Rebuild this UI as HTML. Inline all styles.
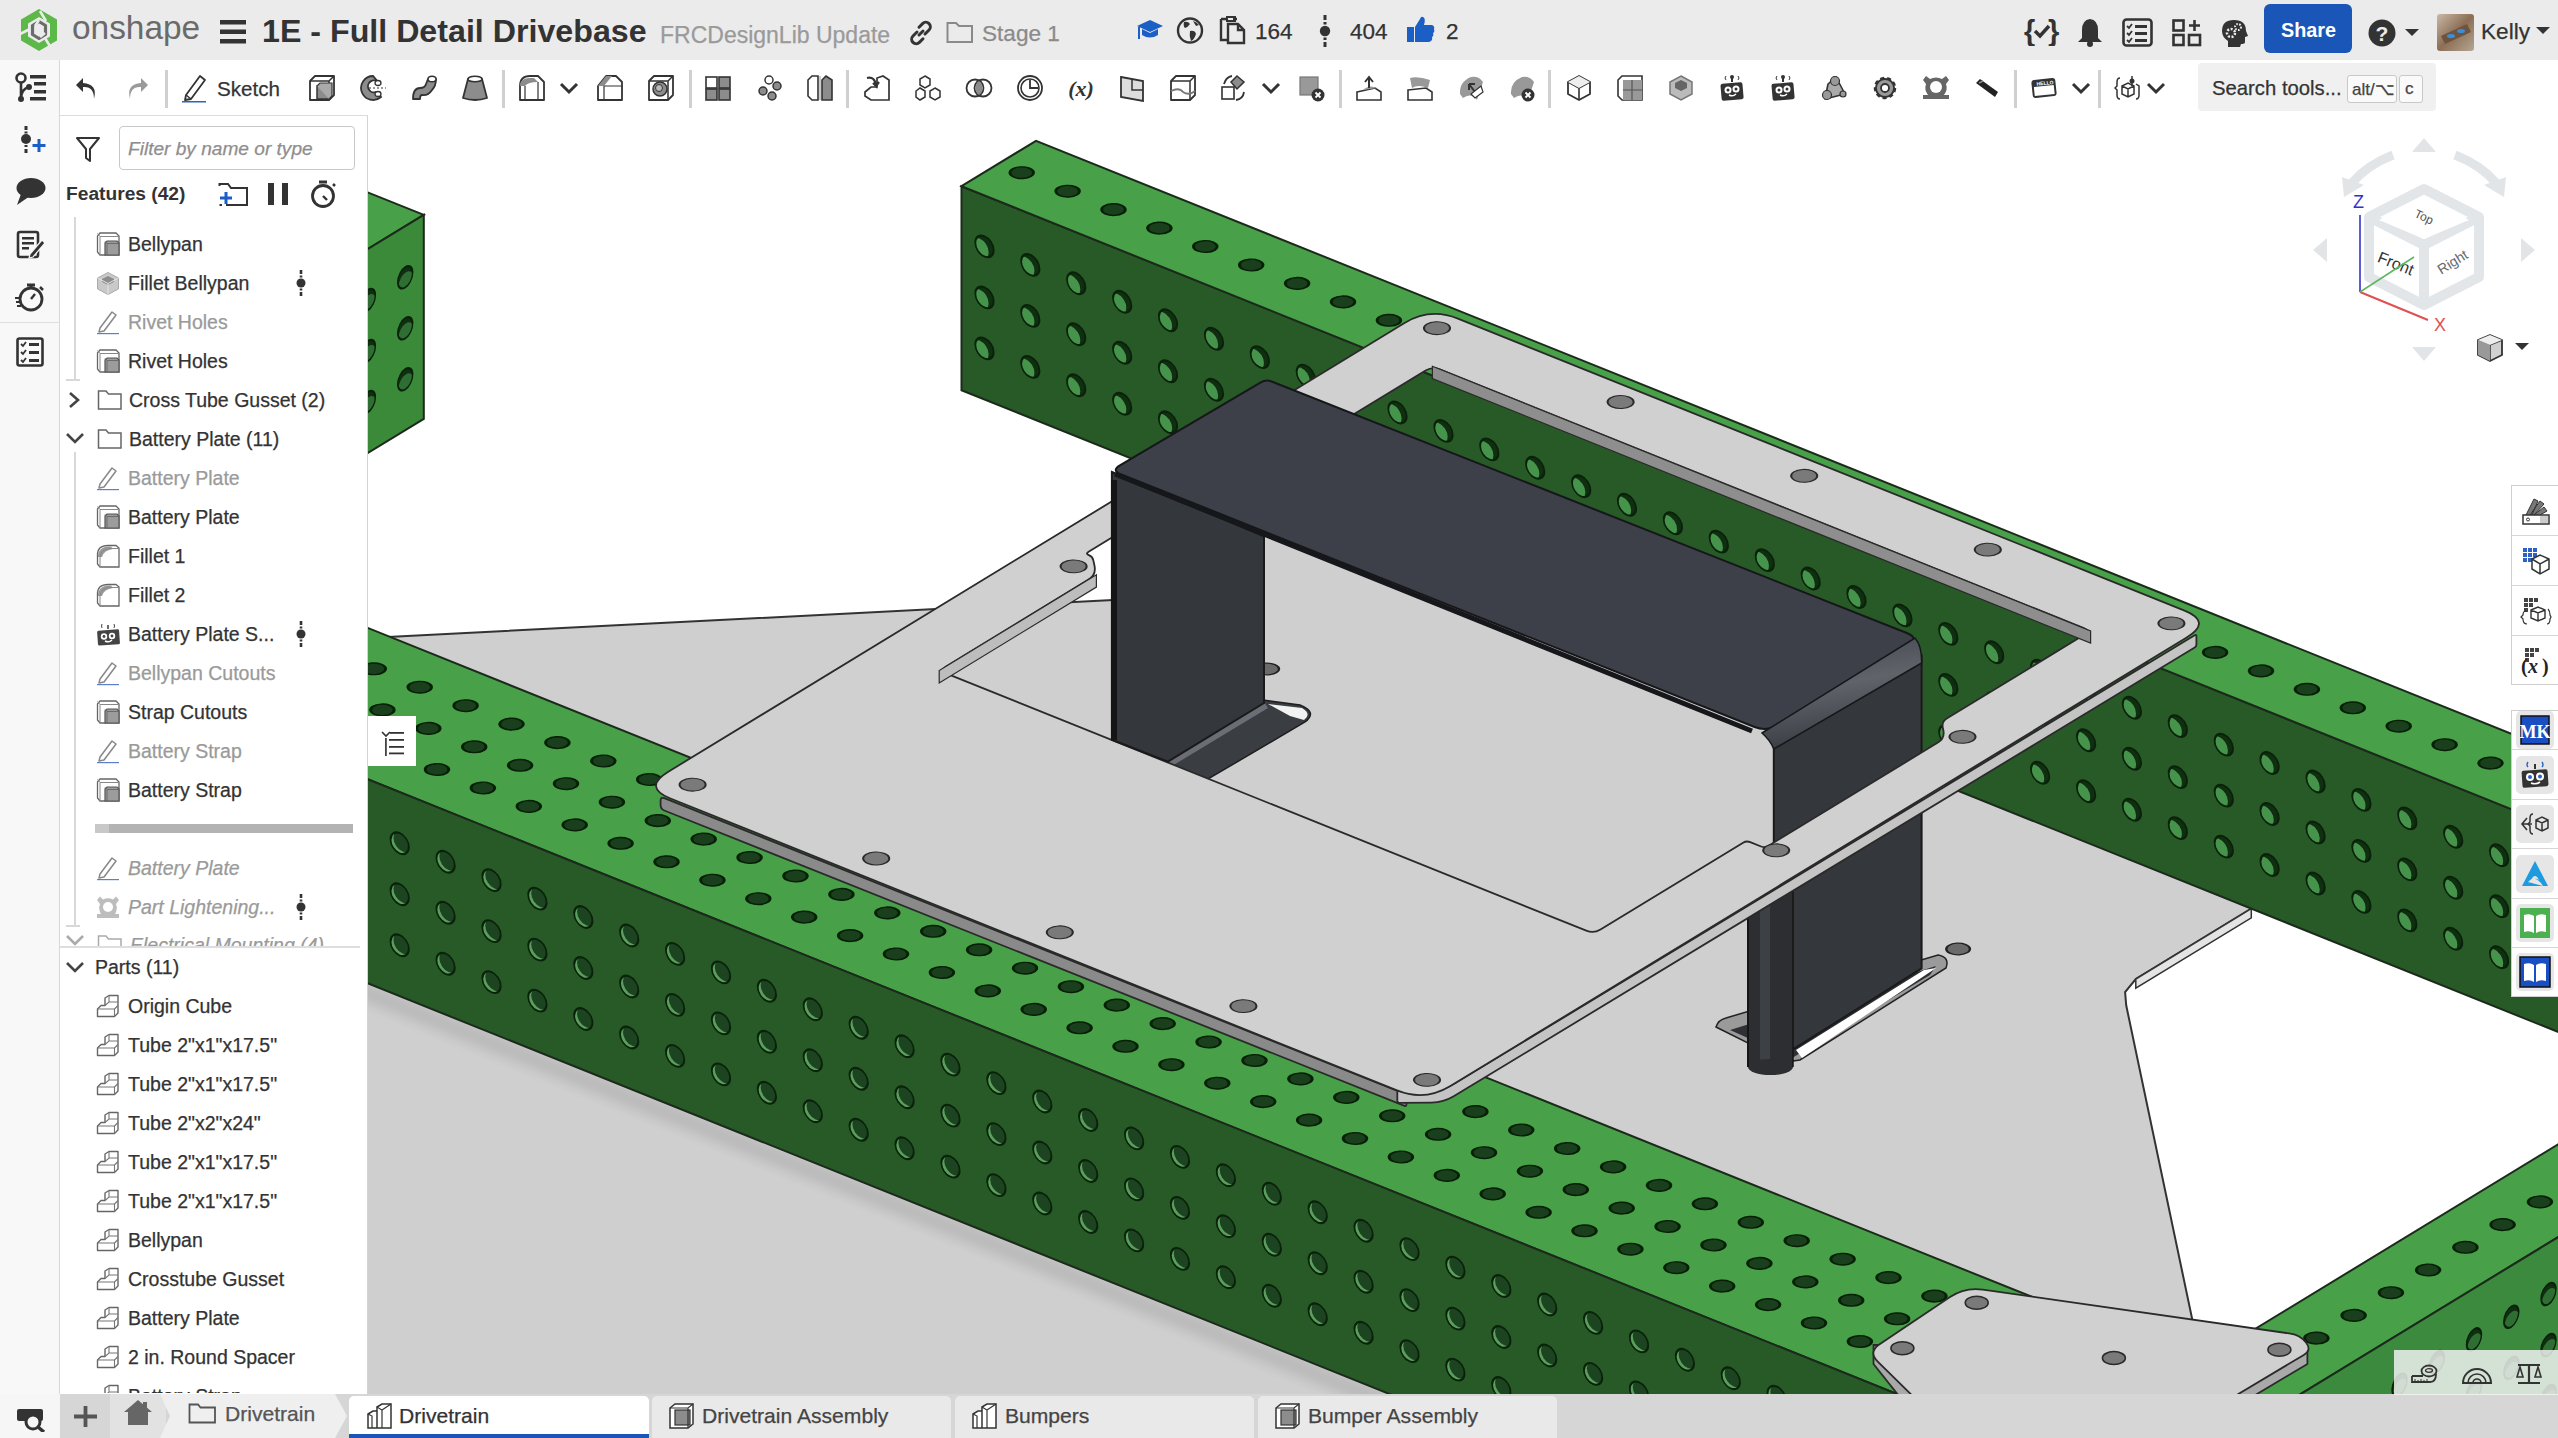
<!DOCTYPE html>
<html><head><meta charset="utf-8">
<style>
*{margin:0;padding:0;box-sizing:border-box}
html,body{width:2558px;height:1438px;overflow:hidden;background:#fff;font-family:"Liberation Sans",sans-serif;color:#333}
.abs{position:absolute}
</style></head><body>
<svg class="abs" style="left:0;top:0" width="2558" height="1438" viewBox="0 0 2558 1438">
<defs><clipPath id="vp"><rect x="368" y="115" width="2190" height="1280"/></clipPath></defs>
<g clip-path="url(#vp)">
<defs><filter id="blur6" x="-5%" y="-50%" width="110%" height="200%"><feGaussianBlur stdDeviation="6"/></filter><g id="hT"><ellipse rx="1" ry="1" transform="matrix(9.180 3.690 7.450 -4.540 0 0)" fill="#1a3f1d" stroke="#062006" stroke-width="0.24"/></g><clipPath id="cF"><ellipse rx="1" ry="1" transform="matrix(9.180 3.690 0.000 -10.200 0 0)"/></clipPath><g id="hF"><ellipse rx="1" ry="1" transform="matrix(9.180 3.690 0.000 -10.200 0 0)" fill="#0f2f10"/><g clip-path="url(#cF)"><ellipse cx="-0.55" cy="-0.42" rx="1" ry="1" transform="matrix(9.180 3.690 0.000 -10.200 0 0)" fill="#46944c"/></g><ellipse rx="1" ry="1" transform="matrix(9.180 3.690 0.000 -10.200 0 0)" fill="none" stroke="#0a220a" stroke-width="0.2"/></g><g id="hF2"><ellipse rx="1" ry="1" transform="matrix(9.180 3.690 0.000 -10.200 0 0)" fill="#5aa05c"/><g clip-path="url(#cF)"><ellipse cx="0.32" cy="0.3" rx="1" ry="1" transform="matrix(9.180 3.690 0.000 -10.200 0 0)" fill="#1c4420"/></g><ellipse rx="1" ry="1" transform="matrix(9.180 3.690 0.000 -10.200 0 0)" fill="none" stroke="#0a220a" stroke-width="0.2"/></g><clipPath id="cX"><ellipse rx="1" ry="1" transform="matrix(7.450 -4.540 0.000 -10.200 0 0)"/></clipPath><g id="hX"><ellipse rx="1" ry="1" transform="matrix(7.450 -4.540 0.000 -10.200 0 0)" fill="#0f2f10"/><g clip-path="url(#cX)"><ellipse cx="0.1" cy="-0.55" rx="1" ry="1" transform="matrix(7.450 -4.540 0.000 -10.200 0 0)" fill="#2e6e33"/></g><ellipse rx="1" ry="1" transform="matrix(7.450 -4.540 0.000 -10.200 0 0)" fill="none" stroke="#0a220a" stroke-width="0.2"/></g><g id="hP"><ellipse rx="1" ry="1" transform="matrix(10.098 4.059 8.195 -4.994 0 0)" fill="#7a7a7a" stroke="#2a2a2a" stroke-width="0.16"/></g></defs><rect x="368" y="115" width="2190" height="1280" fill="#ffffff"/>
<polygon points="-6080.1,967.6 1137.3,598.7 1497.1,379.5 2474.8,772.4 2135.8,979.0 2125.1,992.0 2126.2,1005.3 2216.7,1435.7 4098.6,2192.2 163.5,4590.2 -7180.5,1638.2" fill="#cfcfcf" stroke="#333" stroke-width="2"/>
<polygon points="2251.3,908.6 2135.8,979.0 2135.8,988.2 2251.3,917.8" fill="#e4e4e4" stroke="#333" stroke-width="1.5"/>
<polygon points="148.4,104.2 423.8,214.9 51.3,441.9 -224.1,331.2" fill="#48a048" stroke="#1c2a1c" stroke-width="2"/>
<polygon points="423.8,214.9 423.8,418.9 -172.2,782.1 -172.2,578.1" fill="#3a8a3a" stroke="#1c2a1c" stroke-width="2"/>
<use href="#hX" x="405.2" y="379.3"/>
<use href="#hX" x="405.2" y="328.3"/>
<use href="#hX" x="405.2" y="277.3"/>
<use href="#hX" x="367.9" y="402.0"/>
<use href="#hX" x="367.9" y="351.0"/>
<use href="#hX" x="367.9" y="300.0"/>
<use href="#hX" x="330.7" y="424.7"/>
<use href="#hX" x="330.7" y="373.7"/>
<use href="#hX" x="330.7" y="322.7"/>
<use href="#hX" x="293.4" y="447.4"/>
<use href="#hX" x="293.4" y="396.4"/>
<use href="#hX" x="293.4" y="345.4"/>
<use href="#hX" x="256.2" y="470.1"/>
<use href="#hX" x="256.2" y="419.1"/>
<use href="#hX" x="256.2" y="368.1"/>
<use href="#hX" x="218.9" y="492.8"/>
<use href="#hX" x="218.9" y="441.8"/>
<use href="#hX" x="218.9" y="390.8"/>
<use href="#hX" x="181.7" y="515.5"/>
<use href="#hX" x="181.7" y="464.5"/>
<use href="#hX" x="181.7" y="413.5"/>
<use href="#hX" x="144.4" y="538.2"/>
<use href="#hX" x="144.4" y="487.2"/>
<use href="#hX" x="144.4" y="436.2"/>
<polygon points="961.5,186.2 961.5,390.2 4633.5,1866.2 4633.5,1662.2" fill="#285a28" stroke="#1c2a1c" stroke-width="2"/>
<polygon points="961.5,186.2 1036.0,140.8 4708.0,1616.8 4633.5,1662.2" fill="#48a048" stroke="#1c2a1c" stroke-width="2"/>
<use href="#hT" x="1021.7" y="172.7"/>
<use href="#hF" x="984.5" y="348.4"/>
<use href="#hF" x="984.5" y="297.4"/>
<use href="#hF" x="984.5" y="246.4"/>
<use href="#hT" x="1067.6" y="191.2"/>
<use href="#hF" x="1030.3" y="366.9"/>
<use href="#hF" x="1030.3" y="315.9"/>
<use href="#hF" x="1030.3" y="264.9"/>
<use href="#hT" x="1113.5" y="209.6"/>
<use href="#hF" x="1076.2" y="385.3"/>
<use href="#hF" x="1076.2" y="334.3"/>
<use href="#hF" x="1076.2" y="283.3"/>
<use href="#hT" x="1159.4" y="228.1"/>
<use href="#hF" x="1122.2" y="403.8"/>
<use href="#hF" x="1122.2" y="352.8"/>
<use href="#hF" x="1122.2" y="301.8"/>
<use href="#hT" x="1205.3" y="246.5"/>
<use href="#hF" x="1168.0" y="422.2"/>
<use href="#hF" x="1168.0" y="371.2"/>
<use href="#hF" x="1168.0" y="320.2"/>
<use href="#hT" x="1251.2" y="265.0"/>
<use href="#hF" x="1214.0" y="440.7"/>
<use href="#hF" x="1214.0" y="389.7"/>
<use href="#hF" x="1214.0" y="338.7"/>
<use href="#hT" x="1297.1" y="283.4"/>
<use href="#hF" x="1259.8" y="459.1"/>
<use href="#hF" x="1259.8" y="408.1"/>
<use href="#hF" x="1259.8" y="357.1"/>
<use href="#hT" x="1343.0" y="301.9"/>
<use href="#hF" x="1305.8" y="477.6"/>
<use href="#hF" x="1305.8" y="426.6"/>
<use href="#hF" x="1305.8" y="375.6"/>
<use href="#hT" x="1388.9" y="320.3"/>
<use href="#hF" x="1351.7" y="496.0"/>
<use href="#hF" x="1351.7" y="445.0"/>
<use href="#hF" x="1351.7" y="394.0"/>
<use href="#hT" x="1434.8" y="338.8"/>
<use href="#hF" x="1397.5" y="514.5"/>
<use href="#hF" x="1397.5" y="463.5"/>
<use href="#hF" x="1397.5" y="412.5"/>
<use href="#hT" x="1480.7" y="357.2"/>
<use href="#hF" x="1443.5" y="532.9"/>
<use href="#hF" x="1443.5" y="481.9"/>
<use href="#hF" x="1443.5" y="430.9"/>
<use href="#hT" x="1526.6" y="375.7"/>
<use href="#hF" x="1489.3" y="551.4"/>
<use href="#hF" x="1489.3" y="500.4"/>
<use href="#hF" x="1489.3" y="449.4"/>
<use href="#hT" x="1572.5" y="394.1"/>
<use href="#hF" x="1535.2" y="569.8"/>
<use href="#hF" x="1535.2" y="518.8"/>
<use href="#hF" x="1535.2" y="467.8"/>
<use href="#hT" x="1618.4" y="412.6"/>
<use href="#hF" x="1581.2" y="588.3"/>
<use href="#hF" x="1581.2" y="537.3"/>
<use href="#hF" x="1581.2" y="486.3"/>
<use href="#hT" x="1664.3" y="431.0"/>
<use href="#hF" x="1627.0" y="606.7"/>
<use href="#hF" x="1627.0" y="555.7"/>
<use href="#hF" x="1627.0" y="504.7"/>
<use href="#hT" x="1710.2" y="449.5"/>
<use href="#hF" x="1672.9" y="625.2"/>
<use href="#hF" x="1672.9" y="574.2"/>
<use href="#hF" x="1672.9" y="523.2"/>
<use href="#hT" x="1756.1" y="467.9"/>
<use href="#hF" x="1718.8" y="643.6"/>
<use href="#hF" x="1718.8" y="592.6"/>
<use href="#hF" x="1718.8" y="541.6"/>
<use href="#hT" x="1802.0" y="486.4"/>
<use href="#hF" x="1764.8" y="662.1"/>
<use href="#hF" x="1764.8" y="611.1"/>
<use href="#hF" x="1764.8" y="560.1"/>
<use href="#hT" x="1847.9" y="504.8"/>
<use href="#hF" x="1810.7" y="680.5"/>
<use href="#hF" x="1810.7" y="629.5"/>
<use href="#hF" x="1810.7" y="578.5"/>
<use href="#hT" x="1893.8" y="523.3"/>
<use href="#hF" x="1856.5" y="699.0"/>
<use href="#hF" x="1856.5" y="648.0"/>
<use href="#hF" x="1856.5" y="597.0"/>
<use href="#hT" x="1939.7" y="541.7"/>
<use href="#hF" x="1902.4" y="717.4"/>
<use href="#hF" x="1902.4" y="666.4"/>
<use href="#hF" x="1902.4" y="615.4"/>
<use href="#hT" x="1985.6" y="560.2"/>
<use href="#hF" x="1948.3" y="735.9"/>
<use href="#hF" x="1948.3" y="684.9"/>
<use href="#hF" x="1948.3" y="633.9"/>
<use href="#hT" x="2031.5" y="578.6"/>
<use href="#hF" x="1994.2" y="754.3"/>
<use href="#hF" x="1994.2" y="703.3"/>
<use href="#hF" x="1994.2" y="652.3"/>
<use href="#hT" x="2077.4" y="597.1"/>
<use href="#hF" x="2040.1" y="772.8"/>
<use href="#hF" x="2040.1" y="721.8"/>
<use href="#hF" x="2040.1" y="670.8"/>
<use href="#hT" x="2123.3" y="615.5"/>
<use href="#hF" x="2086.1" y="791.2"/>
<use href="#hF" x="2086.1" y="740.2"/>
<use href="#hF" x="2086.1" y="689.2"/>
<use href="#hT" x="2169.2" y="634.0"/>
<use href="#hF" x="2131.9" y="809.7"/>
<use href="#hF" x="2131.9" y="758.7"/>
<use href="#hF" x="2131.9" y="707.7"/>
<use href="#hT" x="2215.1" y="652.4"/>
<use href="#hF" x="2177.8" y="828.1"/>
<use href="#hF" x="2177.8" y="777.1"/>
<use href="#hF" x="2177.8" y="726.1"/>
<use href="#hT" x="2261.0" y="670.9"/>
<use href="#hF" x="2223.8" y="846.6"/>
<use href="#hF" x="2223.8" y="795.6"/>
<use href="#hF" x="2223.8" y="744.6"/>
<use href="#hT" x="2306.9" y="689.3"/>
<use href="#hF" x="2269.6" y="865.0"/>
<use href="#hF" x="2269.6" y="814.0"/>
<use href="#hF" x="2269.6" y="763.0"/>
<use href="#hT" x="2352.8" y="707.8"/>
<use href="#hF" x="2315.6" y="883.5"/>
<use href="#hF" x="2315.6" y="832.5"/>
<use href="#hF" x="2315.6" y="781.5"/>
<use href="#hT" x="2398.7" y="726.2"/>
<use href="#hF" x="2361.4" y="901.9"/>
<use href="#hF" x="2361.4" y="850.9"/>
<use href="#hF" x="2361.4" y="799.9"/>
<use href="#hT" x="2444.6" y="744.7"/>
<use href="#hF" x="2407.3" y="920.4"/>
<use href="#hF" x="2407.3" y="869.4"/>
<use href="#hF" x="2407.3" y="818.4"/>
<use href="#hT" x="2490.5" y="763.1"/>
<use href="#hF" x="2453.2" y="938.8"/>
<use href="#hF" x="2453.2" y="887.8"/>
<use href="#hF" x="2453.2" y="836.8"/>
<use href="#hT" x="2536.4" y="781.6"/>
<use href="#hF" x="2499.1" y="957.3"/>
<use href="#hF" x="2499.1" y="906.3"/>
<use href="#hF" x="2499.1" y="855.3"/>
<use href="#hT" x="2582.3" y="800.0"/>
<use href="#hF" x="2545.1" y="975.7"/>
<use href="#hF" x="2545.1" y="924.7"/>
<use href="#hF" x="2545.1" y="873.7"/>
<use href="#hT" x="2628.2" y="818.5"/>
<use href="#hF" x="2590.9" y="994.2"/>
<use href="#hF" x="2590.9" y="943.2"/>
<use href="#hF" x="2590.9" y="892.2"/>
<use href="#hT" x="2674.1" y="836.9"/>
<use href="#hF" x="2636.8" y="1012.6"/>
<use href="#hF" x="2636.8" y="961.6"/>
<use href="#hF" x="2636.8" y="910.6"/>
<use href="#hT" x="2720.0" y="855.4"/>
<use href="#hF" x="2682.8" y="1031.1"/>
<use href="#hF" x="2682.8" y="980.1"/>
<use href="#hF" x="2682.8" y="929.1"/>
<use href="#hT" x="2765.9" y="873.8"/>
<use href="#hF" x="2728.6" y="1049.5"/>
<use href="#hF" x="2728.6" y="998.5"/>
<use href="#hF" x="2728.6" y="947.5"/>
<use href="#hT" x="2811.8" y="892.3"/>
<use href="#hF" x="2774.6" y="1068.0"/>
<use href="#hF" x="2774.6" y="1017.0"/>
<use href="#hF" x="2774.6" y="966.0"/>
<polygon points="1976.9,1498.5 3243.4,726.7 3335.2,763.6 2068.7,1535.4" fill="#48a048" stroke="#1c2a1c" stroke-width="2"/>
<polygon points="2068.7,1535.4 3335.2,763.6 3335.2,967.6 2068.7,1739.4" fill="#3b8a3e" stroke="#1c2a1c" stroke-width="2"/>
<use href="#hT" x="2316.4" y="1338.1"/>
<use href="#hX" x="2362.3" y="1509.5"/>
<use href="#hX" x="2362.3" y="1458.5"/>
<use href="#hX" x="2362.3" y="1407.5"/>
<use href="#hT" x="2353.6" y="1315.4"/>
<use href="#hX" x="2399.5" y="1486.8"/>
<use href="#hX" x="2399.5" y="1435.8"/>
<use href="#hX" x="2399.5" y="1384.8"/>
<use href="#hT" x="2390.9" y="1292.7"/>
<use href="#hX" x="2436.8" y="1464.1"/>
<use href="#hX" x="2436.8" y="1413.1"/>
<use href="#hX" x="2436.8" y="1362.1"/>
<use href="#hT" x="2428.1" y="1270.0"/>
<use href="#hX" x="2474.0" y="1441.4"/>
<use href="#hX" x="2474.0" y="1390.4"/>
<use href="#hX" x="2474.0" y="1339.4"/>
<use href="#hT" x="2465.4" y="1247.3"/>
<use href="#hX" x="2511.3" y="1418.7"/>
<use href="#hX" x="2511.3" y="1367.7"/>
<use href="#hX" x="2511.3" y="1316.7"/>
<use href="#hT" x="2502.6" y="1224.6"/>
<use href="#hX" x="2548.5" y="1396.0"/>
<use href="#hX" x="2548.5" y="1345.0"/>
<use href="#hX" x="2548.5" y="1294.0"/>
<use href="#hT" x="2539.9" y="1201.9"/>
<use href="#hX" x="2585.8" y="1373.3"/>
<use href="#hX" x="2585.8" y="1322.3"/>
<use href="#hX" x="2585.8" y="1271.3"/>
<use href="#hT" x="2577.1" y="1179.2"/>
<use href="#hX" x="2623.0" y="1350.6"/>
<use href="#hX" x="2623.0" y="1299.6"/>
<use href="#hX" x="2623.0" y="1248.6"/>
<use href="#hT" x="2614.4" y="1156.5"/>
<use href="#hX" x="2660.3" y="1327.9"/>
<use href="#hX" x="2660.3" y="1276.9"/>
<use href="#hX" x="2660.3" y="1225.9"/>
<use href="#hT" x="2651.6" y="1133.8"/>
<use href="#hX" x="2697.5" y="1305.2"/>
<use href="#hX" x="2697.5" y="1254.2"/>
<use href="#hX" x="2697.5" y="1203.2"/>
<use href="#hT" x="2688.9" y="1111.1"/>
<use href="#hX" x="2734.8" y="1282.5"/>
<use href="#hX" x="2734.8" y="1231.5"/>
<use href="#hX" x="2734.8" y="1180.5"/>
<use href="#hT" x="2726.1" y="1088.4"/>
<use href="#hX" x="2772.0" y="1259.8"/>
<use href="#hX" x="2772.0" y="1208.8"/>
<use href="#hX" x="2772.0" y="1157.8"/>
<use href="#hT" x="2763.4" y="1065.7"/>
<use href="#hX" x="2809.3" y="1237.1"/>
<use href="#hX" x="2809.3" y="1186.1"/>
<use href="#hX" x="2809.3" y="1135.1"/>
<use href="#hT" x="2800.6" y="1043.0"/>
<use href="#hX" x="2846.5" y="1214.4"/>
<use href="#hX" x="2846.5" y="1163.4"/>
<use href="#hX" x="2846.5" y="1112.4"/>
<use href="#hT" x="2837.9" y="1020.3"/>
<use href="#hX" x="2883.8" y="1191.7"/>
<use href="#hX" x="2883.8" y="1140.7"/>
<use href="#hX" x="2883.8" y="1089.7"/>
<use href="#hT" x="2875.1" y="997.6"/>
<use href="#hX" x="2921.0" y="1169.0"/>
<use href="#hX" x="2921.0" y="1118.0"/>
<use href="#hX" x="2921.0" y="1067.0"/>
<use href="#hT" x="2912.4" y="974.9"/>
<use href="#hX" x="2958.3" y="1146.3"/>
<use href="#hX" x="2958.3" y="1095.3"/>
<use href="#hX" x="2958.3" y="1044.3"/>
<use href="#hT" x="2949.6" y="952.2"/>
<use href="#hX" x="2995.5" y="1123.6"/>
<use href="#hX" x="2995.5" y="1072.6"/>
<use href="#hX" x="2995.5" y="1021.6"/>
<use href="#hT" x="2986.9" y="929.5"/>
<use href="#hX" x="3032.8" y="1100.9"/>
<use href="#hX" x="3032.8" y="1049.9"/>
<use href="#hX" x="3032.8" y="998.9"/>
<use href="#hT" x="3024.1" y="906.8"/>
<use href="#hX" x="3070.0" y="1078.2"/>
<use href="#hX" x="3070.0" y="1027.2"/>
<use href="#hX" x="3070.0" y="976.2"/>
<polygon points="-1697.0,153.4 2140.3,1695.8 2121.6,1707.2 -1715.6,164.8" fill="#000" opacity="0.10" filter="url(#blur6)"/>
<polygon points="-1547.2,-141.8 2198.2,1363.7 2048.5,1454.9 -1697.0,-50.6" fill="#48a048" stroke="#1c2a1c" stroke-width="2"/>
<polygon points="-1697.0,-50.6 2140.3,1491.8 2140.3,1695.8 -1697.0,153.4" fill="#285a28" stroke="#1c2a1c" stroke-width="2"/>
<use href="#hT" x="-710.5" y="308.3"/>
<use href="#hT" x="-673.3" y="285.6"/>
<use href="#hT" x="-636.0" y="262.9"/>
<use href="#hF2" x="-747.8" y="484.0"/>
<use href="#hF2" x="-747.8" y="433.0"/>
<use href="#hF2" x="-747.8" y="382.0"/>
<use href="#hT" x="-664.6" y="326.7"/>
<use href="#hT" x="-627.4" y="304.0"/>
<use href="#hT" x="-590.1" y="281.3"/>
<use href="#hF2" x="-701.9" y="502.4"/>
<use href="#hF2" x="-701.9" y="451.4"/>
<use href="#hF2" x="-701.9" y="400.4"/>
<use href="#hT" x="-618.7" y="345.2"/>
<use href="#hT" x="-581.5" y="322.5"/>
<use href="#hT" x="-544.2" y="299.8"/>
<use href="#hF2" x="-656.0" y="520.9"/>
<use href="#hF2" x="-656.0" y="469.9"/>
<use href="#hF2" x="-656.0" y="418.9"/>
<use href="#hT" x="-572.8" y="363.6"/>
<use href="#hT" x="-535.6" y="340.9"/>
<use href="#hT" x="-498.3" y="318.2"/>
<use href="#hF2" x="-610.1" y="539.3"/>
<use href="#hF2" x="-610.1" y="488.3"/>
<use href="#hF2" x="-610.1" y="437.3"/>
<use href="#hT" x="-526.9" y="382.1"/>
<use href="#hT" x="-489.7" y="359.4"/>
<use href="#hT" x="-452.4" y="336.7"/>
<use href="#hF2" x="-564.2" y="557.8"/>
<use href="#hF2" x="-564.2" y="506.8"/>
<use href="#hF2" x="-564.2" y="455.8"/>
<use href="#hT" x="-481.0" y="400.5"/>
<use href="#hT" x="-443.8" y="377.8"/>
<use href="#hT" x="-406.5" y="355.1"/>
<use href="#hF2" x="-518.3" y="576.2"/>
<use href="#hF2" x="-518.3" y="525.2"/>
<use href="#hF2" x="-518.3" y="474.2"/>
<use href="#hT" x="-435.1" y="419.0"/>
<use href="#hT" x="-397.9" y="396.3"/>
<use href="#hT" x="-360.6" y="373.6"/>
<use href="#hF2" x="-472.4" y="594.7"/>
<use href="#hF2" x="-472.4" y="543.7"/>
<use href="#hF2" x="-472.4" y="492.7"/>
<use href="#hT" x="-389.2" y="437.4"/>
<use href="#hT" x="-352.0" y="414.7"/>
<use href="#hT" x="-314.7" y="392.0"/>
<use href="#hF2" x="-426.5" y="613.1"/>
<use href="#hF2" x="-426.5" y="562.1"/>
<use href="#hF2" x="-426.5" y="511.1"/>
<use href="#hT" x="-343.3" y="455.9"/>
<use href="#hT" x="-306.1" y="433.2"/>
<use href="#hT" x="-268.8" y="410.5"/>
<use href="#hF2" x="-380.6" y="631.6"/>
<use href="#hF2" x="-380.6" y="580.6"/>
<use href="#hF2" x="-380.6" y="529.6"/>
<use href="#hT" x="-297.4" y="474.3"/>
<use href="#hT" x="-260.2" y="451.6"/>
<use href="#hT" x="-222.9" y="428.9"/>
<use href="#hF2" x="-334.7" y="650.0"/>
<use href="#hF2" x="-334.7" y="599.0"/>
<use href="#hF2" x="-334.7" y="548.0"/>
<use href="#hT" x="-251.5" y="492.8"/>
<use href="#hT" x="-214.3" y="470.1"/>
<use href="#hT" x="-177.0" y="447.4"/>
<use href="#hF2" x="-288.8" y="668.5"/>
<use href="#hF2" x="-288.8" y="617.5"/>
<use href="#hF2" x="-288.8" y="566.5"/>
<use href="#hT" x="-205.6" y="511.2"/>
<use href="#hT" x="-168.4" y="488.5"/>
<use href="#hT" x="-131.1" y="465.8"/>
<use href="#hF2" x="-242.9" y="686.9"/>
<use href="#hF2" x="-242.9" y="635.9"/>
<use href="#hF2" x="-242.9" y="584.9"/>
<use href="#hT" x="-159.7" y="529.7"/>
<use href="#hT" x="-122.5" y="507.0"/>
<use href="#hT" x="-85.2" y="484.3"/>
<use href="#hF2" x="-197.0" y="705.4"/>
<use href="#hF2" x="-197.0" y="654.4"/>
<use href="#hF2" x="-197.0" y="603.4"/>
<use href="#hT" x="-113.8" y="548.1"/>
<use href="#hT" x="-76.6" y="525.4"/>
<use href="#hT" x="-39.3" y="502.7"/>
<use href="#hF2" x="-151.1" y="723.8"/>
<use href="#hF2" x="-151.1" y="672.8"/>
<use href="#hF2" x="-151.1" y="621.8"/>
<use href="#hT" x="-67.9" y="566.6"/>
<use href="#hT" x="-30.7" y="543.9"/>
<use href="#hT" x="6.6" y="521.2"/>
<use href="#hF2" x="-105.2" y="742.3"/>
<use href="#hF2" x="-105.2" y="691.3"/>
<use href="#hF2" x="-105.2" y="640.3"/>
<use href="#hT" x="-22.0" y="585.0"/>
<use href="#hT" x="15.2" y="562.3"/>
<use href="#hT" x="52.5" y="539.6"/>
<use href="#hF2" x="-59.3" y="760.7"/>
<use href="#hF2" x="-59.3" y="709.7"/>
<use href="#hF2" x="-59.3" y="658.7"/>
<use href="#hT" x="23.9" y="603.5"/>
<use href="#hT" x="61.1" y="580.8"/>
<use href="#hT" x="98.4" y="558.1"/>
<use href="#hF2" x="-13.4" y="779.2"/>
<use href="#hF2" x="-13.4" y="728.2"/>
<use href="#hF2" x="-13.4" y="677.2"/>
<use href="#hT" x="69.8" y="621.9"/>
<use href="#hT" x="107.0" y="599.2"/>
<use href="#hT" x="144.3" y="576.5"/>
<use href="#hF2" x="32.5" y="797.6"/>
<use href="#hF2" x="32.5" y="746.6"/>
<use href="#hF2" x="32.5" y="695.6"/>
<use href="#hT" x="115.7" y="640.4"/>
<use href="#hT" x="152.9" y="617.7"/>
<use href="#hT" x="190.2" y="595.0"/>
<use href="#hF2" x="78.4" y="816.1"/>
<use href="#hF2" x="78.4" y="765.1"/>
<use href="#hF2" x="78.4" y="714.1"/>
<use href="#hT" x="161.6" y="658.8"/>
<use href="#hT" x="198.8" y="636.1"/>
<use href="#hT" x="236.1" y="613.4"/>
<use href="#hF2" x="124.3" y="834.5"/>
<use href="#hF2" x="124.3" y="783.5"/>
<use href="#hF2" x="124.3" y="732.5"/>
<use href="#hT" x="207.5" y="677.3"/>
<use href="#hT" x="244.7" y="654.6"/>
<use href="#hT" x="282.0" y="631.9"/>
<use href="#hF2" x="170.2" y="853.0"/>
<use href="#hF2" x="170.2" y="802.0"/>
<use href="#hF2" x="170.2" y="751.0"/>
<use href="#hT" x="253.4" y="695.7"/>
<use href="#hT" x="290.6" y="673.0"/>
<use href="#hT" x="327.9" y="650.3"/>
<use href="#hF2" x="216.1" y="871.4"/>
<use href="#hF2" x="216.1" y="820.4"/>
<use href="#hF2" x="216.1" y="769.4"/>
<use href="#hT" x="299.3" y="714.2"/>
<use href="#hT" x="336.5" y="691.5"/>
<use href="#hT" x="373.8" y="668.8"/>
<use href="#hF2" x="262.0" y="889.9"/>
<use href="#hF2" x="262.0" y="838.9"/>
<use href="#hF2" x="262.0" y="787.9"/>
<use href="#hT" x="345.2" y="732.6"/>
<use href="#hT" x="382.4" y="709.9"/>
<use href="#hT" x="419.7" y="687.2"/>
<use href="#hF2" x="307.9" y="908.3"/>
<use href="#hF2" x="307.9" y="857.3"/>
<use href="#hF2" x="307.9" y="806.3"/>
<use href="#hT" x="391.1" y="751.1"/>
<use href="#hT" x="428.3" y="728.4"/>
<use href="#hT" x="465.6" y="705.7"/>
<use href="#hF2" x="353.8" y="926.8"/>
<use href="#hF2" x="353.8" y="875.8"/>
<use href="#hF2" x="353.8" y="824.8"/>
<use href="#hT" x="437.0" y="769.5"/>
<use href="#hT" x="474.2" y="746.8"/>
<use href="#hT" x="511.5" y="724.1"/>
<use href="#hF2" x="399.7" y="945.2"/>
<use href="#hF2" x="399.7" y="894.2"/>
<use href="#hF2" x="399.7" y="843.2"/>
<use href="#hT" x="482.9" y="788.0"/>
<use href="#hT" x="520.1" y="765.3"/>
<use href="#hT" x="557.4" y="742.6"/>
<use href="#hF2" x="445.6" y="963.7"/>
<use href="#hF2" x="445.6" y="912.7"/>
<use href="#hF2" x="445.6" y="861.7"/>
<use href="#hT" x="528.8" y="806.4"/>
<use href="#hT" x="566.0" y="783.7"/>
<use href="#hT" x="603.3" y="761.0"/>
<use href="#hF2" x="491.5" y="982.1"/>
<use href="#hF2" x="491.5" y="931.1"/>
<use href="#hF2" x="491.5" y="880.1"/>
<use href="#hT" x="574.7" y="824.9"/>
<use href="#hT" x="611.9" y="802.2"/>
<use href="#hT" x="649.2" y="779.5"/>
<use href="#hF2" x="537.4" y="1000.6"/>
<use href="#hF2" x="537.4" y="949.6"/>
<use href="#hF2" x="537.4" y="898.6"/>
<use href="#hT" x="620.6" y="843.3"/>
<use href="#hT" x="657.8" y="820.6"/>
<use href="#hT" x="695.1" y="797.9"/>
<use href="#hF2" x="583.3" y="1019.0"/>
<use href="#hF2" x="583.3" y="968.0"/>
<use href="#hF2" x="583.3" y="917.0"/>
<use href="#hT" x="666.5" y="861.8"/>
<use href="#hT" x="703.7" y="839.1"/>
<use href="#hT" x="741.0" y="816.4"/>
<use href="#hF2" x="629.2" y="1037.5"/>
<use href="#hF2" x="629.2" y="986.5"/>
<use href="#hF2" x="629.2" y="935.5"/>
<use href="#hT" x="712.4" y="880.2"/>
<use href="#hT" x="749.6" y="857.5"/>
<use href="#hT" x="786.9" y="834.8"/>
<use href="#hF2" x="675.1" y="1055.9"/>
<use href="#hF2" x="675.1" y="1004.9"/>
<use href="#hF2" x="675.1" y="953.9"/>
<use href="#hT" x="758.3" y="898.7"/>
<use href="#hT" x="795.5" y="876.0"/>
<use href="#hT" x="832.8" y="853.3"/>
<use href="#hF2" x="721.0" y="1074.4"/>
<use href="#hF2" x="721.0" y="1023.4"/>
<use href="#hF2" x="721.0" y="972.4"/>
<use href="#hT" x="804.2" y="917.1"/>
<use href="#hT" x="841.4" y="894.4"/>
<use href="#hT" x="878.7" y="871.7"/>
<use href="#hF2" x="766.9" y="1092.8"/>
<use href="#hF2" x="766.9" y="1041.8"/>
<use href="#hF2" x="766.9" y="990.8"/>
<use href="#hT" x="850.1" y="935.6"/>
<use href="#hT" x="887.3" y="912.9"/>
<use href="#hT" x="924.6" y="890.2"/>
<use href="#hF2" x="812.8" y="1111.3"/>
<use href="#hF2" x="812.8" y="1060.3"/>
<use href="#hF2" x="812.8" y="1009.3"/>
<use href="#hT" x="896.0" y="954.0"/>
<use href="#hT" x="933.2" y="931.3"/>
<use href="#hT" x="970.5" y="908.6"/>
<use href="#hF2" x="858.7" y="1129.7"/>
<use href="#hF2" x="858.7" y="1078.7"/>
<use href="#hF2" x="858.7" y="1027.7"/>
<use href="#hT" x="941.9" y="972.5"/>
<use href="#hT" x="979.1" y="949.8"/>
<use href="#hT" x="1016.4" y="927.1"/>
<use href="#hF2" x="904.6" y="1148.2"/>
<use href="#hF2" x="904.6" y="1097.2"/>
<use href="#hF2" x="904.6" y="1046.2"/>
<use href="#hT" x="987.8" y="990.9"/>
<use href="#hT" x="1025.0" y="968.2"/>
<use href="#hT" x="1062.3" y="945.5"/>
<use href="#hF2" x="950.5" y="1166.6"/>
<use href="#hF2" x="950.5" y="1115.6"/>
<use href="#hF2" x="950.5" y="1064.6"/>
<use href="#hT" x="1033.7" y="1009.4"/>
<use href="#hT" x="1070.9" y="986.7"/>
<use href="#hT" x="1108.2" y="964.0"/>
<use href="#hF2" x="996.4" y="1185.1"/>
<use href="#hF2" x="996.4" y="1134.1"/>
<use href="#hF2" x="996.4" y="1083.1"/>
<use href="#hT" x="1079.6" y="1027.8"/>
<use href="#hT" x="1116.8" y="1005.1"/>
<use href="#hT" x="1154.1" y="982.4"/>
<use href="#hF2" x="1042.3" y="1203.5"/>
<use href="#hF2" x="1042.3" y="1152.5"/>
<use href="#hF2" x="1042.3" y="1101.5"/>
<use href="#hT" x="1125.5" y="1046.3"/>
<use href="#hT" x="1162.7" y="1023.6"/>
<use href="#hT" x="1200.0" y="1000.9"/>
<use href="#hF2" x="1088.2" y="1222.0"/>
<use href="#hF2" x="1088.2" y="1171.0"/>
<use href="#hF2" x="1088.2" y="1120.0"/>
<use href="#hT" x="1171.4" y="1064.7"/>
<use href="#hT" x="1208.6" y="1042.0"/>
<use href="#hT" x="1245.9" y="1019.3"/>
<use href="#hF2" x="1134.1" y="1240.4"/>
<use href="#hF2" x="1134.1" y="1189.4"/>
<use href="#hF2" x="1134.1" y="1138.4"/>
<use href="#hT" x="1217.3" y="1083.2"/>
<use href="#hT" x="1254.5" y="1060.5"/>
<use href="#hT" x="1291.8" y="1037.8"/>
<use href="#hF2" x="1180.0" y="1258.9"/>
<use href="#hF2" x="1180.0" y="1207.9"/>
<use href="#hF2" x="1180.0" y="1156.9"/>
<use href="#hT" x="1263.2" y="1101.6"/>
<use href="#hT" x="1300.4" y="1078.9"/>
<use href="#hT" x="1337.7" y="1056.2"/>
<use href="#hF2" x="1225.9" y="1277.3"/>
<use href="#hF2" x="1225.9" y="1226.3"/>
<use href="#hF2" x="1225.9" y="1175.3"/>
<use href="#hT" x="1309.1" y="1120.1"/>
<use href="#hT" x="1346.3" y="1097.4"/>
<use href="#hT" x="1383.6" y="1074.7"/>
<use href="#hF2" x="1271.8" y="1295.8"/>
<use href="#hF2" x="1271.8" y="1244.8"/>
<use href="#hF2" x="1271.8" y="1193.8"/>
<use href="#hT" x="1355.0" y="1138.5"/>
<use href="#hT" x="1392.2" y="1115.8"/>
<use href="#hT" x="1429.5" y="1093.1"/>
<use href="#hF2" x="1317.7" y="1314.2"/>
<use href="#hF2" x="1317.7" y="1263.2"/>
<use href="#hF2" x="1317.7" y="1212.2"/>
<use href="#hT" x="1400.9" y="1157.0"/>
<use href="#hT" x="1438.1" y="1134.3"/>
<use href="#hT" x="1475.4" y="1111.6"/>
<use href="#hF2" x="1363.6" y="1332.7"/>
<use href="#hF2" x="1363.6" y="1281.7"/>
<use href="#hF2" x="1363.6" y="1230.7"/>
<use href="#hT" x="1446.8" y="1175.4"/>
<use href="#hT" x="1484.0" y="1152.7"/>
<use href="#hT" x="1521.3" y="1130.0"/>
<use href="#hF2" x="1409.5" y="1351.1"/>
<use href="#hF2" x="1409.5" y="1300.1"/>
<use href="#hF2" x="1409.5" y="1249.1"/>
<use href="#hT" x="1492.7" y="1193.9"/>
<use href="#hT" x="1529.9" y="1171.2"/>
<use href="#hT" x="1567.2" y="1148.5"/>
<use href="#hF2" x="1455.4" y="1369.6"/>
<use href="#hF2" x="1455.4" y="1318.6"/>
<use href="#hF2" x="1455.4" y="1267.6"/>
<use href="#hT" x="1538.6" y="1212.3"/>
<use href="#hT" x="1575.8" y="1189.6"/>
<use href="#hT" x="1613.1" y="1166.9"/>
<use href="#hF2" x="1501.3" y="1388.0"/>
<use href="#hF2" x="1501.3" y="1337.0"/>
<use href="#hF2" x="1501.3" y="1286.0"/>
<use href="#hT" x="1584.5" y="1230.8"/>
<use href="#hT" x="1621.7" y="1208.1"/>
<use href="#hT" x="1659.0" y="1185.4"/>
<use href="#hF2" x="1547.2" y="1406.5"/>
<use href="#hF2" x="1547.2" y="1355.5"/>
<use href="#hF2" x="1547.2" y="1304.5"/>
<use href="#hT" x="1630.4" y="1249.2"/>
<use href="#hT" x="1667.6" y="1226.5"/>
<use href="#hT" x="1704.9" y="1203.8"/>
<use href="#hF2" x="1593.1" y="1424.9"/>
<use href="#hF2" x="1593.1" y="1373.9"/>
<use href="#hF2" x="1593.1" y="1322.9"/>
<use href="#hT" x="1676.3" y="1267.7"/>
<use href="#hT" x="1713.5" y="1245.0"/>
<use href="#hT" x="1750.8" y="1222.3"/>
<use href="#hF2" x="1639.0" y="1443.4"/>
<use href="#hF2" x="1639.0" y="1392.4"/>
<use href="#hF2" x="1639.0" y="1341.4"/>
<use href="#hT" x="1722.2" y="1286.1"/>
<use href="#hT" x="1759.4" y="1263.4"/>
<use href="#hT" x="1796.7" y="1240.7"/>
<use href="#hF2" x="1684.9" y="1461.8"/>
<use href="#hF2" x="1684.9" y="1410.8"/>
<use href="#hF2" x="1684.9" y="1359.8"/>
<use href="#hT" x="1768.1" y="1304.6"/>
<use href="#hT" x="1805.3" y="1281.9"/>
<use href="#hT" x="1842.6" y="1259.2"/>
<use href="#hF2" x="1730.8" y="1480.3"/>
<use href="#hF2" x="1730.8" y="1429.3"/>
<use href="#hF2" x="1730.8" y="1378.3"/>
<use href="#hT" x="1814.0" y="1323.0"/>
<use href="#hT" x="1851.2" y="1300.3"/>
<use href="#hT" x="1888.5" y="1277.6"/>
<use href="#hF2" x="1776.7" y="1498.7"/>
<use href="#hF2" x="1776.7" y="1447.7"/>
<use href="#hF2" x="1776.7" y="1396.7"/>
<use href="#hT" x="1859.9" y="1341.5"/>
<use href="#hT" x="1897.1" y="1318.8"/>
<use href="#hT" x="1934.4" y="1296.1"/>
<use href="#hF2" x="1822.6" y="1517.2"/>
<use href="#hF2" x="1822.6" y="1466.2"/>
<use href="#hF2" x="1822.6" y="1415.2"/>
<use href="#hT" x="1905.8" y="1359.9"/>
<use href="#hT" x="1943.0" y="1337.2"/>
<use href="#hT" x="1980.3" y="1314.5"/>
<use href="#hF2" x="1868.5" y="1535.6"/>
<use href="#hF2" x="1868.5" y="1484.6"/>
<use href="#hF2" x="1868.5" y="1433.6"/>
<use href="#hT" x="1951.7" y="1378.4"/>
<use href="#hT" x="1988.9" y="1355.7"/>
<use href="#hT" x="2026.2" y="1333.0"/>
<use href="#hF2" x="1914.4" y="1554.1"/>
<use href="#hF2" x="1914.4" y="1503.1"/>
<use href="#hF2" x="1914.4" y="1452.1"/>
<use href="#hT" x="1997.6" y="1396.8"/>
<use href="#hT" x="2034.8" y="1374.1"/>
<use href="#hT" x="2072.1" y="1351.4"/>
<use href="#hF2" x="1960.3" y="1572.5"/>
<use href="#hF2" x="1960.3" y="1521.5"/>
<use href="#hF2" x="1960.3" y="1470.5"/>
<use href="#hT" x="2043.5" y="1415.3"/>
<use href="#hT" x="2080.7" y="1392.6"/>
<use href="#hT" x="2118.0" y="1369.9"/>
<use href="#hF2" x="2006.2" y="1591.0"/>
<use href="#hF2" x="2006.2" y="1540.0"/>
<use href="#hF2" x="2006.2" y="1489.0"/>
<use href="#hF2" x="2052.1" y="1609.4"/>
<use href="#hF2" x="2052.1" y="1558.4"/>
<use href="#hF2" x="2052.1" y="1507.4"/>
<use href="#hF2" x="2098.0" y="1627.9"/>
<use href="#hF2" x="2098.0" y="1576.9"/>
<use href="#hF2" x="2098.0" y="1525.9"/>
<use href="#hF2" x="2143.9" y="1646.3"/>
<use href="#hF2" x="2143.9" y="1595.3"/>
<use href="#hF2" x="2143.9" y="1544.3"/>
<ellipse rx="1" ry="1" transform="matrix(9.180 3.690 7.450 -4.540 1958.1 949.0)" fill="#6a6a6a" stroke="#222" stroke-width="0.2"/>
<ellipse rx="1" ry="1" transform="matrix(9.180 3.690 7.450 -4.540 1267.2 669.0)" fill="#6a6a6a" stroke="#222" stroke-width="0.2"/>
<path d="M1716,1027 Q1718,1020 1726,1018 L1938,955 Q1950,957 1946,968 L1800,1060 L1786,1062 Z" fill="#9a9a9a" stroke="#222" stroke-width="1.5"/>
<path d="M1730,1030 L1936,966 L1930,975 L1792,1058 Z" fill="#2e3033"/>
<path d="M1796,1050 L1924,970 L1936,968 L1802,1058 Z" fill="#ffffff"/>
<path d="M1160,762 L1263,700 L1300,705 Q1318,712 1305,722 L1208,779 Z" fill="#3a3d42" stroke="#1e1e1e" stroke-width="1.5"/>
<path d="M1166,760 L1264,702 L1268,708 L1172,766 Z" fill="#6b6e74"/>
<path d="M1268,704 L1302,708 Q1312,714 1304,720 L1290,716 Z" fill="#f2f2f2"/>
<polygon points="1773.8,739 1921.6,655.6 1921.6,968.4 1794.7,1048.4 1773.8,1040" fill="#34373c" stroke="#1a1a1a" stroke-width="2"/>
<rect x="1748" y="880" width="45" height="187" fill="#2c2e31"/>
<rect x="1760" y="880" width="10" height="187" fill="#3d4044"/>
<ellipse cx="1770.5" cy="1067" rx="22.5" ry="8" fill="#2c2e31"/>
<line x1="1748" y1="880" x2="1748" y2="1067" stroke="#151515" stroke-width="2"/><line x1="1793" y1="880" x2="1793" y2="1067" stroke="#151515" stroke-width="1.5"/>
<path d="M660.6,800.7 Q660.6,796.7 664.3,798.2 L1404.5,1093.6 Q1406.4,1094.3 1406.4,1096.3 L1406.4,1104.5 Q1406.4,1106.5 1404.5,1105.8 L664.3,810.5 Q660.6,809.0 660.6,805.0 Z" fill="#8a8a8a" stroke="#2a2a2a" stroke-width="1.8"/>
<path d="M1397.3,1092.6 Q1397.3,1090.6 1399.3,1090.6 L1431.4,1090.4 Q1443.4,1090.3 1453.7,1084.1 L2194.7,635.2 Q2196.4,634.2 2196.4,636.2 L2196.4,644.5 Q2196.4,646.5 2194.7,647.5 L1453.7,1096.3 Q1443.4,1102.5 1431.4,1102.6 L1399.3,1102.8 Q1397.3,1102.8 1397.3,1100.8 Z" fill="#c4c4c4" stroke="#2a2a2a" stroke-width="1.8"/>
<path d="M1404.5,323.0 Q1430.1,307.4 1457.9,318.6 L2184.5,610.6 Q2212.3,621.8 2186.7,637.4 L1450.4,1086.0 Q1424.8,1101.6 1397.0,1090.4 L670.5,798.5 Q642.7,787.3 668.3,771.7 Z M1439.8,369.3 Q1432.4,366.3 1425.6,370.5 L1279.4,459.6 Q1276.0,461.7 1272.0,461.6 L1241.2,461.2 Q1237.2,461.1 1233.8,463.2 L1088.6,551.7 Q1085.2,553.8 1088.9,555.2 L1088.9,555.2 Q1092.6,556.7 1093.4,560.6 L1094.5,565.8 Q1096.4,574.8 1088.5,579.6 L946.0,666.4 Q939.2,670.6 946.6,673.6 L1586.3,930.7 Q1593.7,933.7 1600.5,929.5 L1743.1,842.7 Q1746.5,840.6 1750.2,842.1 L1761.1,846.5 Q1764.8,848.0 1768.2,845.9 L1937.9,742.6 Q1945.1,738.2 1943.3,730.0 L1942.8,727.6 Q1941.6,721.7 1946.7,718.6 L2083.8,635.1 Q2090.6,630.9 2083.2,627.9 Z" fill="#d0d0d0" fill-rule="evenodd" stroke="#2a2a2a" stroke-width="1.8"/>
<polygon points="1432.4,366.3 2090.6,630.9 2090.6,643.1 1432.4,378.6" fill="#8e8e8e" stroke="#2a2a2a" stroke-width="1.2"/>
<polygon points="1096.4,574.8 1096.4,587.1 939.2,682.9 939.2,670.6" fill="#bdbdbd" stroke="#2a2a2a" stroke-width="1.2"/>
<use href="#hP" x="1437.0" y="328.2"/>
<use href="#hP" x="1620.6" y="402.0"/>
<use href="#hP" x="1804.2" y="475.8"/>
<use href="#hP" x="1987.8" y="549.6"/>
<use href="#hP" x="2171.4" y="623.4"/>
<use href="#hP" x="692.6" y="784.7"/>
<use href="#hP" x="876.2" y="858.5"/>
<use href="#hP" x="1059.8" y="932.3"/>
<use href="#hP" x="1243.4" y="1006.1"/>
<use href="#hP" x="1427.0" y="1079.9"/>
<use href="#hP" x="1073.6" y="566.4"/>
<use href="#hP" x="1776.2" y="850.3"/>
<use href="#hP" x="1962.5" y="736.8"/>
<polygon points="1111.9,471.9 1264,536.4 1264,703 1167.9,761.6 1111.9,739.7" fill="#34373b" stroke="#1a1a1a" stroke-width="2"/>
<line x1="1114" y1="480" x2="1114" y2="740" stroke="#151515" stroke-width="6"/>
<path d="M1120.6,474.1 Q1111.3,470.4 1119.9,465.3 L1260.8,382.3 Q1266.0,379.3 1271.6,381.5 L1906.8,633.0 Q1919.8,638.2 1907.9,645.5 L1778.9,724.7 Q1767.0,732.0 1754.0,726.8 Z" fill="#3d4048" stroke="#16171a" stroke-width="2"/>
<line x1="1115" y1="474" x2="1752" y2="731" stroke="#16171a" stroke-width="5"/>
<defs><linearGradient id="bend" x1="0" y1="0" x2="0.25" y2="1"><stop offset="0" stop-color="#3f4249"/><stop offset="0.5" stop-color="#60636a"/><stop offset="1" stop-color="#393c42"/></linearGradient></defs>
<path d="M1762,733 L1915,638 Q1922,646 1921.6,663 L1773.8,749 Q1770,740 1762,733Z" fill="url(#bend)" stroke="#16171a" stroke-width="1.5"/>
<path d="M1873.5,1345 L1873.5,1364 L1922,1425 L2205,1425 L2307.4,1364 L2307.4,1347 Z" fill="#a9a9a9" stroke="#2a2a2a" stroke-width="1.8"/>
<path d="M1878.0,1361.8 Q1868.0,1352.0 1879.6,1344.2 L1950.0,1297.0 Q1965.0,1287.0 1982.8,1289.6 L2290.5,1333.6 Q2300.0,1335.0 2306.0,1342.5 L2306.0,1342.5 Q2312.0,1350.0 2303.8,1354.9 L2198.4,1417.9 Q2195.0,1420.0 2191.0,1420.0 L1941.0,1420.0 Q1937.0,1420.0 1934.2,1417.2 Z" fill="#d0d0d0" stroke="#2a2a2a" stroke-width="1.8"/>
<ellipse cx="1902.4" cy="1348.3" rx="11.5" ry="6.5" fill="#7a7a7a" stroke="#2a2a2a" stroke-width="1.5"/>
<ellipse cx="1976.7" cy="1302.8" rx="11.5" ry="6.5" fill="#7a7a7a" stroke="#2a2a2a" stroke-width="1.5"/>
<ellipse cx="2113.9" cy="1358.1" rx="11.5" ry="6.5" fill="#7a7a7a" stroke="#2a2a2a" stroke-width="1.5"/>
<ellipse cx="2279.4" cy="1349.7" rx="11.5" ry="6.5" fill="#7a7a7a" stroke="#2a2a2a" stroke-width="1.5"/>
</g>
</svg>
<div class="abs" style="left:0px;top:0px;width:2558px;height:60px;background:#ebebeb;"></div>
<div class="abs" style="left:60px;top:60px;width:2498px;height:55px;background:#ffffff;"></div>
<div class="abs" style="left:0px;top:60px;width:60px;height:1335px;background:#f8f8f8;border-right:1px solid #d9d9d9"></div>
<div class="abs" style="left:60px;top:115px;width:308px;height:1280px;background:#ffffff;border-top:1px solid #dcdcdc;border-right:1px solid #d4d4d4"></div>
<div class="abs" style="left:0px;top:322px;width:60px;height:1px;background:#dedede;"></div>
<svg class="abs" style="left:18px;top:7px" width="42" height="46" viewBox="0 0 42 46"><g stroke-linejoin="round"><path d="M21,2 L39,12.5 L39,33.5 L21,44 L3,33.5 L3,12.5 Z" fill="#5cb848"/><path d="M21,10 L32,16.5 L32,29.5 L21,36 L10,29.5 L10,16.5 Z" fill="#ebebeb"/><path d="M21,14.5 L27.5,18.5 L27.5,27.5 L21,31.5 L14.5,27.5 L14.5,18.5 Z" fill="none" stroke="#6b6b6b" stroke-width="3.2"/><path d="M22,4 L28,14 M2,27 L12,22 M27,31 L33,41 M21,13 L17,19 M27,26 L22,30" stroke="#ebebeb" stroke-width="2.6"/></g></svg>
<div class="abs" style="left:72px;top:8.9px;font-size:33.4px;line-height:38.4px;color:#6a6a6a;font-weight:normal;font-style:normal;white-space:nowrap;-webkit-text-stroke:0.25px #6a6a6a;-webkit-text-stroke:0px;">onshape</div>
<svg class="abs" style="left:220px;top:20px" width="26" height="24" viewBox="0 0 26 24"><rect x="0" y="0" width="26" height="4.5" fill="#333"/><rect x="0" y="9.5" width="26" height="4.5" fill="#333"/><rect x="0" y="19" width="26" height="4.5" fill="#333"/></svg>
<div class="abs" style="left:262px;top:13.1px;font-size:32.2px;line-height:37.0px;color:#333;font-weight:bold;font-style:normal;white-space:nowrap;-webkit-text-stroke:0px #333;">1E - Full Detail Drivebase</div>
<div class="abs" style="left:660px;top:21.6px;font-size:23px;line-height:26.4px;color:#9a9a9a;font-weight:normal;font-style:normal;white-space:nowrap;-webkit-text-stroke:0.25px #9a9a9a;">FRCDesignLib Update</div>
<svg class="abs" style="left:908px;top:20px" width="26" height="26" viewBox="0 0 26 26"><g fill="none" stroke="#333" stroke-width="3" stroke-linecap="round"><path d="M11,15 L15,11"/><path d="M9,12 L5,16 a4.5,4.5 0 0 0 6.4,6.4 L15,18.8"/><path d="M17,14 L21,10 a4.5,4.5 0 0 0 -6.4,-6.4 L11,7.2"/></g></svg>
<svg class="abs" style="left:946px;top:20px" width="28" height="24" viewBox="0 0 28 24"><path d="M1.5,3 L10,3 L13,6 L26,6 L26,22 L1.5,22 Z" fill="none" stroke="#8a8a8a" stroke-width="2"/></svg>
<div class="abs" style="left:982px;top:21.0px;font-size:22.6px;line-height:26.0px;color:#8a8a8a;font-weight:normal;font-style:normal;white-space:nowrap;-webkit-text-stroke:0.25px #8a8a8a;">Stage 1</div>
<svg class="abs" style="left:1136px;top:18px" width="28" height="24" viewBox="0 0 28 24"><path d="M14,2 L27,8 L14,14 L1,8 Z" fill="#1b5ec5"/><path d="M6,11 L6,17 Q14,22 22,17 L22,11 L14,15 Z" fill="#1b5ec5"/><path d="M3,9 L3,21" stroke="#1b5ec5" stroke-width="2"/></svg>
<svg class="abs" style="left:1176px;top:16px" width="28" height="29" viewBox="0 0 28 29"><circle cx="14" cy="14.5" r="12" fill="none" stroke="#333" stroke-width="2.4"/><path d="M8,6 Q12,5 14,8 Q12,11 9,12 Q7,10 8,6Z M14,15 Q19,14 20,18 Q18,24 15,25 Q13,20 14,15Z M17,5 Q21,6 23,9 L20,10Z" fill="#333"/></svg>
<svg class="abs" style="left:1218px;top:15px" width="30" height="30" viewBox="0 0 30 30"><path d="M3,4 L9,4 M3,4 L3,25 L9,25 M15,4 L19,4" fill="none" stroke="#333" stroke-width="2.4"/><rect x="9" y="2" width="8" height="4" fill="none" stroke="#333" stroke-width="2"/><path d="M10,9 L20,9 L26,15 L26,28 L10,28 Z M20,9 L20,15 L26,15" fill="none" stroke="#333" stroke-width="2.4"/></svg>
<div class="abs" style="left:1255px;top:19.1px;font-size:22.5px;line-height:25.9px;color:#333;font-weight:normal;font-style:normal;white-space:nowrap;-webkit-text-stroke:0.25px #333;">164</div>
<svg class="abs" style="left:1319px;top:14px" width="12" height="34" viewBox="0 0 12 34"><circle cx="6" cy="17" r="5.2" fill="#333"/><rect x="4.5" y="1" width="3" height="5" fill="#333"/><rect x="4.5" y="8" width="3" height="2.5" fill="#333"/><rect x="4.5" y="23.5" width="3" height="2.5" fill="#333"/><rect x="4.5" y="28" width="3" height="5" fill="#333"/></svg>
<div class="abs" style="left:1350px;top:19.1px;font-size:22.5px;line-height:25.9px;color:#333;font-weight:normal;font-style:normal;white-space:nowrap;-webkit-text-stroke:0.25px #333;">404</div>
<svg class="abs" style="left:1406px;top:15px" width="30" height="28" viewBox="0 0 30 28"><path d="M1,12 L8,12 L8,27 L1,27 Z" fill="#1b5ec5"/><path d="M9,12 L14,4 Q15,1 17,2 Q20,3 18,10 L26,10 Q29,11 28,14 Q29,17 27,18 Q28,21 26,22 Q27,26 23,27 L9,27 Z" fill="#1b5ec5"/></svg>
<div class="abs" style="left:1446px;top:19.1px;font-size:22.5px;line-height:25.9px;color:#333;font-weight:normal;font-style:normal;white-space:nowrap;-webkit-text-stroke:0.25px #333;">2</div>
<svg class="abs" style="left:2024px;top:16px" width="36" height="30" viewBox="0 0 36 30"><text x="0" y="25" font-family="Liberation Sans" font-size="29" font-weight="bold" fill="#333">{</text><text x="24" y="25" font-family="Liberation Sans" font-size="29" font-weight="bold" fill="#333">}</text><path d="M11,15 L16,20 L25,10" fill="none" stroke="#333" stroke-width="3.5"/></svg>
<svg class="abs" style="left:2076px;top:17px" width="28" height="30" viewBox="0 0 28 30"><path d="M14,2 Q22,3 22,13 L22,21 L26,25 L2,25 L6,21 L6,13 Q6,3 14,2Z" fill="#333"/><circle cx="14" cy="27" r="3" fill="#333"/></svg>
<svg class="abs" style="left:2122px;top:18px" width="31" height="29" viewBox="0 0 31 29"><rect x="1.5" y="1.5" width="28" height="26" rx="3" fill="none" stroke="#333" stroke-width="2.6"/><path d="M5,8 L7,10 L10,6 M5,15 L7,17 L10,13 M5,22 L7,24 L10,20" fill="none" stroke="#333" stroke-width="1.8"/><rect x="13" y="7" width="12" height="3" fill="#333"/><rect x="13" y="14" width="12" height="3" fill="#333"/><rect x="13" y="21" width="12" height="3" fill="#333"/></svg>
<svg class="abs" style="left:2172px;top:19px" width="30" height="28" viewBox="0 0 30 28"><rect x="1.5" y="1.5" width="10" height="10" fill="none" stroke="#333" stroke-width="2.6"/><rect x="1.5" y="16" width="10" height="10" fill="none" stroke="#333" stroke-width="2.6"/><rect x="17" y="16" width="11" height="10" fill="none" stroke="#333" stroke-width="2.6"/><path d="M22.5,1 L22.5,12 M17,6.5 L28,6.5" stroke="#333" stroke-width="2.6"/></svg>
<svg class="abs" style="left:2220px;top:19px" width="30" height="28" viewBox="0 0 30 28"><path d="M14,1 Q26,1 26,12 L28,17 L25,18 L25,23 Q25,25 21,25 L20,28 L8,28 L8,22 Q2,18 2,12 Q2,1 14,1Z" fill="#333"/><circle cx="11" cy="14" r="4" fill="none" stroke="#ebebeb" stroke-width="2.5" stroke-dasharray="2 1.6"/><circle cx="18" cy="8" r="3" fill="none" stroke="#ebebeb" stroke-width="2" stroke-dasharray="1.6 1.4"/></svg>
<div class="abs" style="left:2264px;top:4px;width:88px;height:49px;background:#1a56b8;border-radius:6px"></div>
<div class="abs" style="left:2281px;top:18.6px;font-size:19.8px;line-height:22.8px;color:#ffffff;font-weight:bold;font-style:normal;white-space:nowrap;-webkit-text-stroke:0px #ffffff;">Share</div>
<svg class="abs" style="left:2367px;top:18px" width="30" height="30" viewBox="0 0 30 30"><circle cx="15" cy="15" r="13.5" fill="#333"/><text x="15" y="23" text-anchor="middle" font-family="Liberation Sans" font-size="21" font-weight="bold" fill="#ebebeb">?</text></svg>
<svg class="abs" style="left:2404px;top:28px" width="16" height="10" viewBox="0 0 16 10"><path d="M1,1 L15,1 L8,8 Z" fill="#333"/></svg>
<svg class="abs" style="left:2437px;top:14px" width="37" height="37" viewBox="0 0 37 37"><defs><linearGradient id="av" x1="0" y1="0" x2="1" y2="1"><stop offset="0" stop-color="#c9b9a6"/><stop offset="0.5" stop-color="#8c6e55"/><stop offset="1" stop-color="#b5a792"/></linearGradient></defs><rect x="0" y="0" width="37" height="37" rx="3" fill="url(#av)"/><path d="M4,22 L30,10 L34,18 L8,30Z" fill="#6e5440"/><ellipse cx="14" cy="22" rx="4" ry="2" fill="#3a8ed8"/><ellipse cx="24" cy="17" rx="4" ry="2" fill="#3a8ed8"/></svg>
<div class="abs" style="left:2481px;top:19.0px;font-size:22.6px;line-height:26.0px;color:#333;font-weight:normal;font-style:normal;white-space:nowrap;-webkit-text-stroke:0.25px #333;">Kelly</div>
<svg class="abs" style="left:2535px;top:26px" width="16" height="10" viewBox="0 0 16 10"><path d="M1,1 L15,1 L8,8 Z" fill="#333"/></svg>
<svg class="abs" style="left:308px;top:74px" width="28" height="28" viewBox="0 0 28 28"><path d="M2,7 L7,2 L26,2 L26,21 L21,26 L2,26 Z" fill="#fff" stroke="#333" stroke-width="1.8" stroke-linejoin="round"/><path d="M2,7 L21,7 L26,2 M21,7 L21,26" fill="none" stroke="#333" stroke-width="1.5"/><rect x="9" y="12" width="12" height="13" fill="#8c8c8c" stroke="#333" stroke-width="1.5"/><path d="M9,12 L12,9 L24,9 L24,22 L21,25" fill="#aaa" stroke="#333" stroke-width="1.2"/></svg>
<svg class="abs" style="left:359px;top:74px" width="28" height="28" viewBox="0 0 28 28"><path d="M14,2 A12,12 0 1 0 22,23 L17,18 A6,6 0 1 1 20,9 Z" fill="#8c8c8c" stroke="#333" stroke-width="1.8"/><ellipse cx="19" cy="9" rx="3" ry="2.5" fill="#fff" stroke="#333" stroke-width="1.3"/><ellipse cx="19" cy="20" rx="3" ry="2.5" fill="#fff" stroke="#333" stroke-width="1.3"/><path d="M10,14 L27,14" stroke="#333" stroke-width="1.2" stroke-dasharray="2 2"/></svg>
<svg class="abs" style="left:410px;top:74px" width="28" height="28" viewBox="0 0 28 28"><path d="M3,25 Q3,14 10,14 Q15,14 16,10 L18,5 L26,5 Q26,12 22,16 Q18,22 12,21 Q10,21 10,25 Z" fill="#8c8c8c" stroke="#333" stroke-width="1.8" stroke-linejoin="round"/><ellipse cx="22" cy="5" rx="4" ry="2.8" fill="#fff" stroke="#333" stroke-width="1.5"/></svg>
<svg class="abs" style="left:461px;top:74px" width="28" height="28" viewBox="0 0 28 28"><path d="M7,5 L21,5 L26,24 Q14,28 2,24 Z" fill="#8c8c8c" stroke="#333" stroke-width="1.8" stroke-linejoin="round"/><ellipse cx="14" cy="5" rx="7" ry="2.8" fill="#fff" stroke="#333" stroke-width="1.5"/></svg>
<svg class="abs" style="left:518px;top:74px" width="28" height="28" viewBox="0 0 28 28"><path d="M2,26 L2,12 Q2,2 12,2 L20,2 L26,8 L26,26 Z" fill="#fff" stroke="#333" stroke-width="1.8" stroke-linejoin="round"/><path d="M2,12 Q2,4 12,4 L16,4 L20,8 Q10,8 7,12 Z" fill="#8c8c8c"/><path d="M7,12 L7,26 M20,8 L20,26" stroke="#333" stroke-width="1.2" fill="none"/></svg>
<svg class="abs" style="left:555px;top:74px" width="28" height="28" viewBox="0 0 28 28"><path d="M6,10 L14,18 L22,10" fill="none" stroke="#333" stroke-width="3"/></svg>
<svg class="abs" style="left:596px;top:74px" width="28" height="28" viewBox="0 0 28 28"><path d="M2,26 L2,12 L10,2 L20,2 L26,8 L26,26 Z" fill="#fff" stroke="#333" stroke-width="1.8" stroke-linejoin="round"/><path d="M2,12 L10,2 L16,2 L8,12 Z" fill="#8c8c8c"/><path d="M8,12 L8,26 M8,12 L26,12" stroke="#333" stroke-width="1.2"/></svg>
<svg class="abs" style="left:647px;top:74px" width="28" height="28" viewBox="0 0 28 28"><path d="M2,7 L7,2 L26,2 L26,21 L21,26 L2,26 Z" fill="#fff" stroke="#333" stroke-width="1.8" stroke-linejoin="round"/><path d="M2,7 L21,7 L26,2 M21,7 L21,26" fill="none" stroke="#333" stroke-width="1.5"/><circle cx="13" cy="15" r="7" fill="#8c8c8c" stroke="#333" stroke-width="1.5"/><circle cx="12" cy="14" r="3.5" fill="#bbb" stroke="#333" stroke-width="1"/></svg>
<svg class="abs" style="left:704px;top:74px" width="28" height="28" viewBox="0 0 28 28"><rect x="2" y="3" width="11" height="11" fill="#fff" stroke="#333" stroke-width="1.6"/><rect x="15" y="3" width="11" height="11" fill="#8c8c8c" stroke="#333" stroke-width="1.6"/><rect x="2" y="15" width="11" height="11" fill="#8c8c8c" stroke="#333" stroke-width="1.6"/><rect x="15" y="15" width="11" height="11" fill="#8c8c8c" stroke="#333" stroke-width="1.6"/></svg>
<svg class="abs" style="left:755px;top:74px" width="28" height="28" viewBox="0 0 28 28"><circle cx="14" cy="6" r="4" fill="#fff" stroke="#333" stroke-width="1.5"/><circle cx="22" cy="12" r="4" fill="#8c8c8c" stroke="#333" stroke-width="1.5"/><circle cx="8" cy="17" r="4" fill="#8c8c8c" stroke="#333" stroke-width="1.5"/><circle cx="17" cy="22" r="4" fill="#8c8c8c" stroke="#333" stroke-width="1.5"/></svg>
<svg class="abs" style="left:806px;top:74px" width="28" height="28" viewBox="0 0 28 28"><path d="M2,6 L6,2 L12,2 L12,26 L6,26 L2,22 Z" fill="#fff" stroke="#333" stroke-width="1.6"/><path d="M16,6 L20,2 L26,6 L26,26 L16,26 Z" fill="#8c8c8c" stroke="#333" stroke-width="1.6"/><rect x="13" y="2" width="2" height="24" fill="#ccc"/></svg>
<svg class="abs" style="left:863px;top:74px" width="28" height="28" viewBox="0 0 28 28"><path d="M2,18 L8,13 L14,13 L14,4 L20,2 L26,6 L26,26 L8,26 L2,22 Z" fill="#fff" stroke="#333" stroke-width="1.7"/><path d="M4,4 Q12,2 13,12 L10,9 M13,12 L16,8" fill="none" stroke="#333" stroke-width="2.2"/></svg>
<svg class="abs" style="left:914px;top:74px" width="28" height="28" viewBox="0 0 28 28"><path d="M9,2 L14,5 L14,11 L9,14 L4,11 L4,5Z M4,14 L9,17 L9,23 L4,26 L0,23 L0,17Z M19,14 L24,17 L24,23 L19,26 L14,23 L14,17Z" fill="#fff" stroke="#333" stroke-width="1.5" transform="translate(2,0)"/></svg>
<svg class="abs" style="left:965px;top:74px" width="28" height="28" viewBox="0 0 28 28"><circle cx="10" cy="14" r="8.5" fill="#fff" stroke="#333" stroke-width="1.8"/><circle cx="18" cy="14" r="8.5" fill="none" stroke="#333" stroke-width="1.8"/><path d="M14,7 A8.5,8.5 0 0 1 14,21 A8.5,8.5 0 0 1 14,7Z" fill="#8c8c8c"/></svg>
<svg class="abs" style="left:1016px;top:74px" width="28" height="28" viewBox="0 0 28 28"><circle cx="14" cy="14" r="12" fill="none" stroke="#333" stroke-width="1.8"/><circle cx="14" cy="14" r="9" fill="none" stroke="#333" stroke-width="1.6"/><path d="M14,6 L14,14 L22,14" fill="none" stroke="#333" stroke-width="1.8"/></svg>
<svg class="abs" style="left:1067px;top:74px" width="28" height="28" viewBox="0 0 28 28"><text x="14" y="22" text-anchor="middle" font-family="Liberation Serif" font-style="italic" font-weight="bold" font-size="22" fill="#333">(x)</text></svg>
<svg class="abs" style="left:1118px;top:74px" width="28" height="28" viewBox="0 0 28 28"><path d="M3,3 L25,7 L25,27 L3,23 Z" fill="#ddd" stroke="#333" stroke-width="1.8"/><path d="M14,5 L14,16 L25,16" fill="none" stroke="#333" stroke-width="1.5"/></svg>
<svg class="abs" style="left:1169px;top:74px" width="28" height="28" viewBox="0 0 28 28"><path d="M2,7 L7,2 L26,2 L26,21 L21,26 L2,26 Z" fill="#fff" stroke="#333" stroke-width="1.8" stroke-linejoin="round"/><path d="M2,7 L21,7 L26,2 M21,7 L21,26" fill="none" stroke="#333" stroke-width="1.5"/><path d="M2,17 Q10,13 14,18 Q20,22 26,17" fill="none" stroke="#777" stroke-width="1.8"/></svg>
<svg class="abs" style="left:1220px;top:74px" width="28" height="28" viewBox="0 0 28 28"><rect x="2" y="13" width="12" height="12" fill="#fff" stroke="#333" stroke-width="1.6"/><path d="M17,2 L24,8 L17,15 L11,8Z" fill="#8c8c8c" stroke="#333" stroke-width="1.5"/><path d="M4,10 Q6,3 12,2 M24,18 Q23,25 16,26" fill="none" stroke="#333" stroke-width="1.8"/></svg>
<svg class="abs" style="left:1257px;top:74px" width="28" height="28" viewBox="0 0 28 28"><path d="M6,10 L14,18 L22,10" fill="none" stroke="#333" stroke-width="3"/></svg>
<svg class="abs" style="left:1298px;top:74px" width="28" height="28" viewBox="0 0 28 28"><rect x="2" y="3" width="18" height="18" fill="#999" stroke="#777" stroke-width="1.2"/><circle cx="20" cy="21" r="6.5" fill="#333"/><path d="M17.5,18.5 L22.5,23.5 M22.5,18.5 L17.5,23.5" stroke="#fff" stroke-width="1.8"/></svg>
<svg class="abs" style="left:1355px;top:74px" width="28" height="28" viewBox="0 0 28 28"><path d="M2,18 L20,14 L26,18 L26,26 L2,26Z" fill="#fff" stroke="#333" stroke-width="1.6"/><path d="M8,16 Q14,10 22,14" fill="#999"/><path d="M14,14 L14,4 M10,8 L14,3 L18,8" fill="none" stroke="#333" stroke-width="2"/></svg>
<svg class="abs" style="left:1406px;top:74px" width="28" height="28" viewBox="0 0 28 28"><path d="M2,16 L20,14 L26,18 L26,26 L2,26Z" fill="#fff" stroke="#333" stroke-width="1.6"/><path d="M4,4 Q12,2 24,6 L22,14 Q12,10 6,14 Z" fill="#999"/></svg>
<svg class="abs" style="left:1457px;top:74px" width="28" height="28" viewBox="0 0 28 28"><path d="M3,20 Q2,8 14,3 Q22,2 26,8 L20,26 Q14,18 6,24Z" fill="#999"/><path d="M12,10 L18,18 M12,10 L12,16 M12,10 L18,10" stroke="#333" stroke-width="2" fill="none"/><path d="M14,20 L24,12 L26,18 L18,24Z" fill="#fff" stroke="#333" stroke-width="1.2"/></svg>
<svg class="abs" style="left:1508px;top:74px" width="28" height="28" viewBox="0 0 28 28"><path d="M3,20 Q2,8 14,3 Q22,2 26,8 L20,26 Q14,18 6,24Z" fill="#999"/><circle cx="20" cy="21" r="6.5" fill="#333"/><path d="M17.5,18.5 L22.5,23.5 M22.5,18.5 L17.5,23.5" stroke="#fff" stroke-width="1.8"/></svg>
<svg class="abs" style="left:1565px;top:74px" width="28" height="28" viewBox="0 0 28 28"><path d="M14,2 L25,8 L25,20 L14,26 L3,20 L3,8Z" fill="#fff" stroke="#333" stroke-width="1.8" stroke-linejoin="round"/><path d="M3,8 L14,14 L25,8 M14,14 L14,26" fill="none" stroke="#333" stroke-width="1.6"/><path d="M3,8 L14,2 L25,8 L14,14Z" fill="#eee"/></svg>
<svg class="abs" style="left:1616px;top:74px" width="28" height="28" viewBox="0 0 28 28"><path d="M2,6 L6,2 L26,2 L26,26 L6,26 L2,22Z" fill="#fff" stroke="#333" stroke-width="1.6"/><rect x="7" y="6" width="19" height="20" fill="#999"/><path d="M7,16 L26,16 M16,6 L16,26" stroke="#555" stroke-width="1.2"/></svg>
<svg class="abs" style="left:1667px;top:74px" width="28" height="28" viewBox="0 0 28 28"><path d="M14,2 L25,8 L25,20 L14,26 L3,20 L3,8Z" fill="#bbb" stroke="#777" stroke-width="1.5"/><path d="M14,6 L20,9 L20,14 L14,17 L8,14 L8,9Z" fill="#666"/></svg>
<svg class="abs" style="left:1718px;top:74px" width="28" height="28" viewBox="0 0 28 28"><rect x="3" y="9" width="22" height="17" rx="2" fill="#333" transform="rotate(-5 14 17)"/><circle cx="10" cy="16" r="3.5" fill="#fff"/><circle cx="18" cy="15" r="3.5" fill="#fff"/><circle cx="10" cy="16" r="1.5" fill="#333"/><circle cx="18" cy="15" r="1.5" fill="#333"/><path d="M11,21 Q15,23 18,20" stroke="#fff" stroke-width="1.5" fill="none"/><path d="M14,8 L14,3" stroke="#333" stroke-width="2"/><circle cx="14" cy="3" r="2" fill="#333"/><path d="M8,2 Q6,4 8,6 M20,2 Q22,4 20,6" stroke="#333" stroke-width="1" fill="none"/></svg>
<svg class="abs" style="left:1769px;top:74px" width="28" height="28" viewBox="0 0 28 28"><rect x="3" y="9" width="22" height="17" rx="2" fill="#333" transform="rotate(-5 14 17)"/><circle cx="10" cy="16" r="3.5" fill="#fff"/><circle cx="18" cy="15" r="3.5" fill="#fff"/><circle cx="10" cy="16" r="1.5" fill="#333"/><circle cx="18" cy="15" r="1.5" fill="#333"/><path d="M11,21 Q15,23 18,20" stroke="#fff" stroke-width="1.5" fill="none"/><path d="M14,8 L14,3" stroke="#333" stroke-width="2"/><circle cx="14" cy="3" r="2" fill="#333"/><path d="M8,2 Q6,4 8,6 M20,2 Q22,4 20,6" stroke="#333" stroke-width="1" fill="none"/></svg>
<svg class="abs" style="left:1820px;top:74px" width="28" height="28" viewBox="0 0 28 28"><path d="M8,10 L16,3 L25,20 L5,25Z" fill="#aaa" stroke="#333" stroke-width="1.6" stroke-linejoin="round"/><circle cx="15" cy="7" r="4.5" fill="#999" stroke="#333" stroke-width="1.2"/><circle cx="7" cy="21" r="4.5" fill="#999" stroke="#333" stroke-width="1.2"/><circle cx="23" cy="20" r="3" fill="#999" stroke="#333" stroke-width="1.2"/></svg>
<svg class="abs" style="left:1871px;top:74px" width="28" height="28" viewBox="0 0 28 28"><circle cx="14" cy="14" r="10" fill="#999" stroke="#333" stroke-width="2.5" stroke-dasharray="4 3"/><circle cx="14" cy="14" r="9" fill="#999" stroke="#333" stroke-width="1.8"/><circle cx="14" cy="14" r="4" fill="#fff" stroke="#333" stroke-width="1.8"/></svg>
<svg class="abs" style="left:1922px;top:74px" width="28" height="28" viewBox="0 0 28 28"><path d="M1,25 L27,25 L27,21 L22,21 Q26,16 24,10 L27,6 L24,2 L20,5 Q14,2 8,5 L4,2 L1,6 L4,10 Q2,16 6,21 L1,21Z" fill="#666"/><circle cx="14" cy="13" r="6" fill="#fff"/></svg>
<svg class="abs" style="left:1973px;top:74px" width="28" height="28" viewBox="0 0 28 28"><path d="M3,9 L7,5 L25,18 L22,23 Z" fill="#222"/><path d="M6,9 L10,7" stroke="#888" stroke-width="1.5"/></svg>
<svg class="abs" style="left:2030px;top:74px" width="28" height="28" viewBox="0 0 28 28"><rect x="2" y="5" width="24" height="18" rx="3" fill="#333" transform="rotate(-6 14 14)"/><rect x="4" y="12" width="20" height="9" fill="#fff" transform="rotate(-6 14 14)"/><text x="7" y="11" font-size="5" fill="#fff" font-family="Liberation Sans" font-weight="bold" transform="rotate(-6 14 14)">HELLO</text></svg>
<svg class="abs" style="left:2067px;top:74px" width="28" height="28" viewBox="0 0 28 28"><path d="M6,10 L14,18 L22,10" fill="none" stroke="#333" stroke-width="3"/></svg>
<svg class="abs" style="left:2114px;top:74px" width="28" height="28" viewBox="0 0 28 28"><path d="M6,4 Q3,4 3,8 L3,12 L1,14 L3,16 L3,21 Q3,25 6,25 M22,10 L25,12 L25,21 Q25,25 22,25" fill="none" stroke="#333" stroke-width="1.5"/><path d="M8,12 L14,9 L20,12 L20,20 L14,23 L8,20Z M8,12 L14,15 L20,12 M14,15 L14,23" fill="none" stroke="#333" stroke-width="1.5"/><circle cx="18" cy="7" r="2.5" fill="#333"/><path d="M18,2 L18,12" stroke="#333" stroke-width="1.5"/></svg>
<svg class="abs" style="left:2142px;top:74px" width="28" height="28" viewBox="0 0 28 28"><path d="M6,10 L14,18 L22,10" fill="none" stroke="#333" stroke-width="3"/></svg>
<div class="abs" style="left:165px;top:70px;width:2.5px;height:38px;background:#d0d0d0;"></div>
<div class="abs" style="left:502px;top:70px;width:2.5px;height:38px;background:#d0d0d0;"></div>
<div class="abs" style="left:689px;top:70px;width:2.5px;height:38px;background:#d0d0d0;"></div>
<div class="abs" style="left:846px;top:70px;width:2.5px;height:38px;background:#d0d0d0;"></div>
<div class="abs" style="left:1339px;top:70px;width:2.5px;height:38px;background:#d0d0d0;"></div>
<div class="abs" style="left:1548px;top:70px;width:2.5px;height:38px;background:#d0d0d0;"></div>
<div class="abs" style="left:2014px;top:70px;width:2.5px;height:38px;background:#d0d0d0;"></div>
<div class="abs" style="left:2098px;top:70px;width:2.5px;height:38px;background:#d0d0d0;"></div>
<svg class="abs" style="left:14px;top:72px" width="34" height="32" viewBox="0 0 34 32"><circle cx="7" cy="6" r="4.5" fill="none" stroke="#333" stroke-width="2.6"/><path d="M7,10.5 L7,27 M7,27 Q7,17 15,15" fill="none" stroke="#333" stroke-width="2.6"/><circle cx="7" cy="27" r="3" fill="#333"/><circle cx="15" cy="15" r="3" fill="#333"/><rect x="16" y="3" width="16" height="3.5" fill="#333"/><rect x="20" y="10" width="12" height="3.5" fill="#333"/><rect x="20" y="18" width="12" height="3.5" fill="#333"/><rect x="16" y="25" width="16" height="3.5" fill="#333"/></svg>
<svg class="abs" style="left:74px;top:75px" width="24" height="26" viewBox="0 0 24 26"><path d="M9,3 L2,10 L9,17 L9,12 Q20,11 20,24 Q24,9 9,8 Z" fill="#333"/></svg>
<svg class="abs" style="left:126px;top:75px" width="24" height="26" viewBox="0 0 24 26"><path d="M15,3 L22,10 L15,17 L15,12 Q4,11 4,24 Q0,9 15,8 Z" fill="#9a9a9a"/></svg>
<svg class="abs" style="left:180px;top:73px" width="30" height="30" viewBox="0 0 30 30"><path d="M6,22 L20,3 L25,7 L11,26 L5,27 Z" fill="none" stroke="#333" stroke-width="1.8" stroke-linejoin="round"/><path d="M6,22 L11,26" stroke="#333" stroke-width="1.5"/><rect x="2" y="28" width="24" height="1.5" fill="#2b62c4"/></svg>
<div class="abs" style="left:217px;top:76.8px;font-size:20.6px;line-height:23.7px;color:#333;font-weight:normal;font-style:normal;white-space:nowrap;-webkit-text-stroke:0.25px #333;">Sketch</div>
<div class="abs" style="left:2198px;top:63px;width:238px;height:48px;background:#f0f0f0;border-radius:4px"></div>
<div class="abs" style="left:2212px;top:77.1px;font-size:20.3px;line-height:23.3px;color:#333;font-weight:normal;font-style:normal;white-space:nowrap;-webkit-text-stroke:0.25px #333;">Search tools...</div>
<div class="abs" style="left:2347px;top:75px;width:50px;height:28px;background:#fafafa;border:1px solid #c8c8c8;border-radius:3px"></div>
<div class="abs" style="left:2352px;top:80.2px;font-size:17px;line-height:19.5px;color:#444;font-weight:normal;font-style:normal;white-space:nowrap;-webkit-text-stroke:0.25px #444;">alt/⌥</div>
<div class="abs" style="left:2399px;top:75px;width:24px;height:28px;background:#fafafa;border:1px solid #c8c8c8;border-radius:3px"></div>
<div class="abs" style="left:2405px;top:79.2px;font-size:17px;line-height:19.5px;color:#444;font-weight:normal;font-style:normal;white-space:nowrap;-webkit-text-stroke:0.25px #444;">c</div>
<svg class="abs" style="left:18px;top:125px" width="30" height="30" viewBox="0 0 30 30"><circle cx="8" cy="14" r="5" fill="#333"/><rect x="6.5" y="1" width="3" height="4" fill="#333"/><rect x="6.5" y="6.5" width="3" height="2" fill="#333"/><rect x="6.5" y="20" width="3" height="2" fill="#333"/><rect x="6.5" y="24" width="3" height="4" fill="#333"/><path d="M21,14 L21,27 M14.5,20.5 L27.5,20.5" stroke="#1b5ec5" stroke-width="3"/></svg>
<svg class="abs" style="left:15px;top:177px" width="32" height="30" viewBox="0 0 32 30"><ellipse cx="16" cy="11" rx="14.5" ry="10" fill="#333"/><path d="M6,17 L2,28 L15,19Z" fill="#333"/></svg>
<svg class="abs" style="left:16px;top:230px" width="30" height="30" viewBox="0 0 30 30"><rect x="2" y="2" width="20" height="25" rx="2" fill="none" stroke="#333" stroke-width="2.6"/><rect x="6" y="7" width="12" height="2.5" fill="#333"/><rect x="6" y="12" width="12" height="2.5" fill="#333"/><rect x="6" y="17" width="7" height="2.5" fill="#333"/><path d="M14,24 L26,10 L29,13 L17,27 L13,28Z" fill="#333" stroke="#f6f6f6" stroke-width="1.2"/></svg>
<svg class="abs" style="left:14px;top:282px" width="32" height="31" viewBox="0 0 32 31"><circle cx="17" cy="17" r="11" fill="none" stroke="#333" stroke-width="2.8"/><rect x="13" y="1.5" width="8" height="3" fill="#333"/><rect x="15.5" y="3" width="3" height="3" fill="#333"/><path d="M17,17 L21,12" stroke="#333" stroke-width="2.4"/><path d="M1,16 L6,16 M2,20 L6,20 M3,24 L7,24" stroke="#333" stroke-width="2"/><path d="M26,5 L29,8" stroke="#333" stroke-width="2.5"/></svg>
<svg class="abs" style="left:16px;top:337px" width="28" height="30" viewBox="0 0 28 30"><rect x="1.5" y="1.5" width="25" height="27" rx="2" fill="none" stroke="#333" stroke-width="2.6"/><path d="M5,7 L7,9 L10,5 M5,15 L7,17 L10,13 M5,23 L7,25 L10,21" fill="none" stroke="#333" stroke-width="1.8"/><rect x="13" y="6" width="10" height="3" fill="#333"/><rect x="13" y="14" width="10" height="3" fill="#333"/><rect x="13" y="22" width="10" height="3" fill="#333"/></svg>
<svg class="abs" style="left:75px;top:136px" width="26" height="27" viewBox="0 0 26 27"><path d="M2,2 L24,2 L15,13 L15,25 L11,22 L11,13 Z" fill="none" stroke="#333" stroke-width="2" stroke-linejoin="round"/></svg>
<div class="abs" style="left:119px;top:126px;width:236px;height:44px;background:#fff;border:1px solid #c9c9c9;border-radius:4px"></div>
<div class="abs" style="left:128px;top:138.2px;font-size:19.1px;line-height:22.0px;color:#8e8e8e;font-weight:normal;font-style:italic;white-space:nowrap;-webkit-text-stroke:0.25px #8e8e8e;">Filter by name or type</div>
<div class="abs" style="left:66px;top:183.1px;font-size:19.2px;line-height:22.1px;color:#333;font-weight:bold;font-style:normal;white-space:nowrap;-webkit-text-stroke:0px #333;">Features (42)</div>
<svg class="abs" style="left:218px;top:182px" width="31" height="25" viewBox="0 0 31 25"><path d="M1.5,4 L1.5,2 L10,2 L13,6 L29,6 L29,23 L8,23" fill="none" stroke="#333" stroke-width="2"/><path d="M1.5,23 L4,23" stroke="#333" stroke-width="2"/><path d="M8,10 L8,22 M2,16 L14,16" stroke="#1b5ec5" stroke-width="3"/></svg>
<div class="abs" style="left:268px;top:183px;width:6px;height:22px;background:#333;"></div>
<div class="abs" style="left:282px;top:183px;width:6px;height:22px;background:#333;"></div>
<svg class="abs" style="left:309px;top:179px" width="28" height="30" viewBox="0 0 28 30"><circle cx="14" cy="17" r="10.5" fill="none" stroke="#333" stroke-width="2.8"/><rect x="10" y="1.5" width="8" height="3" fill="#333"/><path d="M14,17 L18,21" stroke="#333" stroke-width="2.4"/><path d="M24,5 L26,7" stroke="#333" stroke-width="2.5"/></svg>
<div class="abs" style="left:74px;top:217px;width:1.5px;height:163px;background:#d8d8d8;"></div>
<div class="abs" style="left:66px;top:379px;width:14px;height:1.5px;background:#d8d8d8;"></div>
<div class="abs" style="left:74px;top:452px;width:1.5px;height:474px;background:#d8d8d8;"></div>
<div class="abs" style="left:66px;top:925px;width:14px;height:1.5px;background:#d8d8d8;"></div>
<svg class="abs" style="left:96px;top:232px" width="25" height="25" viewBox="0 0 25 25"><path d="M1.5,4 L4,1 L20,1 L23,4 L23,23 L4,23 L1.5,20 Z" fill="#fff" stroke="#666" stroke-width="1.3"/><path d="M4,23 L4,4.5 L23,4.5 M4,4.5 L1.5,1.5" fill="none" stroke="#888" stroke-width="1"/><path d="M9,11 L11,9 L21,9 L23,11 L23,23 L9,23Z" fill="#9c9c9c" stroke="#555" stroke-width="1.2"/><path d="M11,23 L11,11.5 L23,11.5 M11,11.5 L9,9.5" fill="none" stroke="#666" stroke-width="0.9"/></svg>
<div class="abs" style="left:128px;top:232.9px;font-size:19.5px;line-height:22.4px;color:#333;font-weight:normal;font-style:normal;white-space:nowrap;-webkit-text-stroke:0.25px #333;">Bellypan</div>
<svg class="abs" style="left:96px;top:271px" width="25" height="25" viewBox="0 0 25 25"><path d="M12,1.5 L22.5,7 L22.5,18 L12,23.5 L1.5,18 L1.5,7Z" fill="#c9c9c9" stroke="#aaa" stroke-width="1"/><path d="M12,5 L18,8 L18,11 L12,14 L6,11 L6,8Z" fill="#8c8c8c"/><path d="M1.5,7 L12,12.5 L22.5,7 M12,12.5 L12,23.5" stroke="#e6e6e6" stroke-width="1" fill="none"/></svg>
<div class="abs" style="left:128px;top:271.9px;font-size:19.5px;line-height:22.4px;color:#333;font-weight:normal;font-style:normal;white-space:nowrap;-webkit-text-stroke:0.25px #333;">Fillet Bellypan</div>
<svg class="abs" style="left:96px;top:310px" width="25" height="25" viewBox="0 0 25 25"><path d="M4,18 L16,2 L20,5 L8,21 L3,22 Z" fill="none" stroke="#888" stroke-width="1.5" stroke-linejoin="round"/><rect x="1" y="23" width="22" height="1.2" fill="#5b7fc8"/></svg>
<div class="abs" style="left:128px;top:310.9px;font-size:19.5px;line-height:22.4px;color:#9a9a9a;font-weight:normal;font-style:normal;white-space:nowrap;-webkit-text-stroke:0.25px #9a9a9a;">Rivet Holes</div>
<svg class="abs" style="left:96px;top:349px" width="25" height="25" viewBox="0 0 25 25"><path d="M1.5,4 L4,1 L20,1 L23,4 L23,23 L4,23 L1.5,20 Z" fill="#fff" stroke="#666" stroke-width="1.3"/><path d="M4,23 L4,4.5 L23,4.5 M4,4.5 L1.5,1.5" fill="none" stroke="#888" stroke-width="1"/><path d="M9,11 L11,9 L21,9 L23,11 L23,23 L9,23Z" fill="#9c9c9c" stroke="#555" stroke-width="1.2"/><path d="M11,23 L11,11.5 L23,11.5 M11,11.5 L9,9.5" fill="none" stroke="#666" stroke-width="0.9"/></svg>
<div class="abs" style="left:128px;top:349.9px;font-size:19.5px;line-height:22.4px;color:#333;font-weight:normal;font-style:normal;white-space:nowrap;-webkit-text-stroke:0.25px #333;">Rivet Holes</div>
<svg class="abs" style="left:97px;top:388px" width="26" height="24" viewBox="0 0 26 24"><path d="M1.5,3 L9,3 L11.5,6 L24,6 L24,21 L1.5,21 Z" fill="none" stroke="#666" stroke-width="1.5"/></svg>
<div class="abs" style="left:129px;top:388.9px;font-size:19.5px;line-height:22.4px;color:#333;font-weight:normal;font-style:normal;white-space:nowrap;-webkit-text-stroke:0.25px #333;">Cross Tube Gusset (2)</div>
<svg class="abs" style="left:97px;top:427px" width="26" height="24" viewBox="0 0 26 24"><path d="M1.5,3 L9,3 L11.5,6 L24,6 L24,21 L1.5,21 Z" fill="none" stroke="#666" stroke-width="1.5"/></svg>
<div class="abs" style="left:129px;top:427.9px;font-size:19.5px;line-height:22.4px;color:#333;font-weight:normal;font-style:normal;white-space:nowrap;-webkit-text-stroke:0.25px #333;">Battery Plate (11)</div>
<svg class="abs" style="left:96px;top:466px" width="25" height="25" viewBox="0 0 25 25"><path d="M4,18 L16,2 L20,5 L8,21 L3,22 Z" fill="none" stroke="#888" stroke-width="1.5" stroke-linejoin="round"/><rect x="1" y="23" width="22" height="1.2" fill="#5b7fc8"/></svg>
<div class="abs" style="left:128px;top:466.9px;font-size:19.5px;line-height:22.4px;color:#9a9a9a;font-weight:normal;font-style:normal;white-space:nowrap;-webkit-text-stroke:0.25px #9a9a9a;">Battery Plate</div>
<svg class="abs" style="left:96px;top:505px" width="25" height="25" viewBox="0 0 25 25"><path d="M1.5,4 L4,1 L20,1 L23,4 L23,23 L4,23 L1.5,20 Z" fill="#fff" stroke="#666" stroke-width="1.3"/><path d="M4,23 L4,4.5 L23,4.5 M4,4.5 L1.5,1.5" fill="none" stroke="#888" stroke-width="1"/><path d="M9,11 L11,9 L21,9 L23,11 L23,23 L9,23Z" fill="#9c9c9c" stroke="#555" stroke-width="1.2"/><path d="M11,23 L11,11.5 L23,11.5 M11,11.5 L9,9.5" fill="none" stroke="#666" stroke-width="0.9"/></svg>
<div class="abs" style="left:128px;top:505.9px;font-size:19.5px;line-height:22.4px;color:#333;font-weight:normal;font-style:normal;white-space:nowrap;-webkit-text-stroke:0.25px #333;">Battery Plate</div>
<svg class="abs" style="left:96px;top:544px" width="25" height="25" viewBox="0 0 25 25"><path d="M1.5,20 L1.5,11 Q1.5,1.5 12,1.5 L20,1.5 L23,4 L23,23 L4,23 Z" fill="#fff" stroke="#666" stroke-width="1.3"/><path d="M2,11 Q3,3 12,2.5 L15,2.5 L17,5 Q8,6 6,13 L2,13Z" fill="#9a9a9a"/><path d="M4,23 L4,13 Q5,5 14,4.5 L23,4.5" fill="none" stroke="#888" stroke-width="1"/></svg>
<div class="abs" style="left:128px;top:544.9px;font-size:19.5px;line-height:22.4px;color:#333;font-weight:normal;font-style:normal;white-space:nowrap;-webkit-text-stroke:0.25px #333;">Fillet 1</div>
<svg class="abs" style="left:96px;top:583px" width="25" height="25" viewBox="0 0 25 25"><path d="M1.5,20 L1.5,11 Q1.5,1.5 12,1.5 L20,1.5 L23,4 L23,23 L4,23 Z" fill="#fff" stroke="#666" stroke-width="1.3"/><path d="M2,11 Q3,3 12,2.5 L15,2.5 L17,5 Q8,6 6,13 L2,13Z" fill="#9a9a9a"/><path d="M4,23 L4,13 Q5,5 14,4.5 L23,4.5" fill="none" stroke="#888" stroke-width="1"/></svg>
<div class="abs" style="left:128px;top:583.9px;font-size:19.5px;line-height:22.4px;color:#333;font-weight:normal;font-style:normal;white-space:nowrap;-webkit-text-stroke:0.25px #333;">Fillet 2</div>
<svg class="abs" style="left:96px;top:622px" width="25" height="25" viewBox="0 0 25 25"><rect x="1.5" y="8" width="22" height="15" rx="1.5" fill="#444" transform="rotate(-4 12 15)"/><circle cx="8" cy="14.5" r="3.2" fill="#fff"/><circle cx="16" cy="14" r="3.2" fill="#fff"/><circle cx="8" cy="14.5" r="1.4" fill="#444"/><circle cx="16" cy="14" r="1.4" fill="#444"/><path d="M9,19 Q13,21 16,18" stroke="#fff" stroke-width="1.4" fill="none"/><path d="M12,7 L12,3" stroke="#444" stroke-width="1.6"/><path d="M6,2 Q5,4 6,6 M18,2 Q19,4 18,6" stroke="#444" stroke-width="1" fill="none"/></svg>
<div class="abs" style="left:128px;top:622.9px;font-size:19.5px;line-height:22.4px;color:#333;font-weight:normal;font-style:normal;white-space:nowrap;-webkit-text-stroke:0.25px #333;">Battery Plate S...</div>
<svg class="abs" style="left:96px;top:661px" width="25" height="25" viewBox="0 0 25 25"><path d="M4,18 L16,2 L20,5 L8,21 L3,22 Z" fill="none" stroke="#888" stroke-width="1.5" stroke-linejoin="round"/><rect x="1" y="23" width="22" height="1.2" fill="#5b7fc8"/></svg>
<div class="abs" style="left:128px;top:661.9px;font-size:19.5px;line-height:22.4px;color:#9a9a9a;font-weight:normal;font-style:normal;white-space:nowrap;-webkit-text-stroke:0.25px #9a9a9a;">Bellypan Cutouts</div>
<svg class="abs" style="left:96px;top:700px" width="25" height="25" viewBox="0 0 25 25"><path d="M1.5,4 L4,1 L20,1 L23,4 L23,23 L4,23 L1.5,20 Z" fill="#fff" stroke="#666" stroke-width="1.3"/><path d="M4,23 L4,4.5 L23,4.5 M4,4.5 L1.5,1.5" fill="none" stroke="#888" stroke-width="1"/><path d="M9,11 L11,9 L21,9 L23,11 L23,23 L9,23Z" fill="#9c9c9c" stroke="#555" stroke-width="1.2"/><path d="M11,23 L11,11.5 L23,11.5 M11,11.5 L9,9.5" fill="none" stroke="#666" stroke-width="0.9"/></svg>
<div class="abs" style="left:128px;top:700.9px;font-size:19.5px;line-height:22.4px;color:#333;font-weight:normal;font-style:normal;white-space:nowrap;-webkit-text-stroke:0.25px #333;">Strap Cutouts</div>
<svg class="abs" style="left:96px;top:739px" width="25" height="25" viewBox="0 0 25 25"><path d="M4,18 L16,2 L20,5 L8,21 L3,22 Z" fill="none" stroke="#888" stroke-width="1.5" stroke-linejoin="round"/><rect x="1" y="23" width="22" height="1.2" fill="#5b7fc8"/></svg>
<div class="abs" style="left:128px;top:739.9px;font-size:19.5px;line-height:22.4px;color:#9a9a9a;font-weight:normal;font-style:normal;white-space:nowrap;-webkit-text-stroke:0.25px #9a9a9a;">Battery Strap</div>
<svg class="abs" style="left:96px;top:778px" width="25" height="25" viewBox="0 0 25 25"><path d="M1.5,4 L4,1 L20,1 L23,4 L23,23 L4,23 L1.5,20 Z" fill="#fff" stroke="#666" stroke-width="1.3"/><path d="M4,23 L4,4.5 L23,4.5 M4,4.5 L1.5,1.5" fill="none" stroke="#888" stroke-width="1"/><path d="M9,11 L11,9 L21,9 L23,11 L23,23 L9,23Z" fill="#9c9c9c" stroke="#555" stroke-width="1.2"/><path d="M11,23 L11,11.5 L23,11.5 M11,11.5 L9,9.5" fill="none" stroke="#666" stroke-width="0.9"/></svg>
<div class="abs" style="left:128px;top:778.9px;font-size:19.5px;line-height:22.4px;color:#333;font-weight:normal;font-style:normal;white-space:nowrap;-webkit-text-stroke:0.25px #333;">Battery Strap</div>
<svg class="abs" style="left:96px;top:856px" width="25" height="25" viewBox="0 0 25 25"><path d="M4,18 L16,2 L20,5 L8,21 L3,22 Z" fill="none" stroke="#888" stroke-width="1.5" stroke-linejoin="round"/><rect x="1" y="23" width="22" height="1.2" fill="#5b7fc8"/></svg>
<div class="abs" style="left:128px;top:856.9px;font-size:19.5px;line-height:22.4px;color:#9a9a9a;font-weight:normal;font-style:italic;white-space:nowrap;-webkit-text-stroke:0.25px #9a9a9a;">Battery Plate</div>
<svg class="abs" style="left:96px;top:895px" width="25" height="25" viewBox="0 0 25 25"><path d="M1,23 L23,23 L23,19 L19,19 Q22,14 20,9 L23,5 L20,1.5 L17,4.5 Q12,2 7,4.5 L4,1.5 L1,5 L4,9 Q2,14 5,19 L1,19Z" fill="#bdbdbd"/><circle cx="12" cy="12" r="5" fill="#fff"/></svg>
<div class="abs" style="left:128px;top:895.9px;font-size:19.5px;line-height:22.4px;color:#9a9a9a;font-weight:normal;font-style:italic;white-space:nowrap;-webkit-text-stroke:0.25px #9a9a9a;">Part Lightening...</div>
<svg class="abs" style="left:295px;top:269px" width="12" height="28" viewBox="0 0 12 28"><circle cx="6" cy="14" r="4.5" fill="#333"/><rect x="4.7" y="1" width="2.6" height="4" fill="#333"/><rect x="4.7" y="6.5" width="2.6" height="2" fill="#333"/><rect x="4.7" y="19.5" width="2.6" height="2" fill="#333"/><rect x="4.7" y="23" width="2.6" height="4" fill="#333"/></svg>
<svg class="abs" style="left:295px;top:620px" width="12" height="28" viewBox="0 0 12 28"><circle cx="6" cy="14" r="4.5" fill="#333"/><rect x="4.7" y="1" width="2.6" height="4" fill="#333"/><rect x="4.7" y="6.5" width="2.6" height="2" fill="#333"/><rect x="4.7" y="19.5" width="2.6" height="2" fill="#333"/><rect x="4.7" y="23" width="2.6" height="4" fill="#333"/></svg>
<svg class="abs" style="left:295px;top:893px" width="12" height="28" viewBox="0 0 12 28"><circle cx="6" cy="14" r="4.5" fill="#333"/><rect x="4.7" y="1" width="2.6" height="4" fill="#333"/><rect x="4.7" y="6.5" width="2.6" height="2" fill="#333"/><rect x="4.7" y="19.5" width="2.6" height="2" fill="#333"/><rect x="4.7" y="23" width="2.6" height="4" fill="#333"/></svg>
<svg class="abs" style="left:66px;top:391px" width="16" height="18" viewBox="0 0 16 18"><path d="M4,2 L12,9 L4,16" fill="none" stroke="#444" stroke-width="2.6"/></svg>
<svg class="abs" style="left:65px;top:431px" width="20" height="14" viewBox="0 0 20 14"><path d="M2,3 L10,11 L18,3" fill="none" stroke="#444" stroke-width="2.6"/></svg>
<div class="abs" style="left:95px;top:824px;width:258px;height:9px;background:#b3b3b3;"></div>
<div class="abs" style="left:95px;top:824px;width:14px;height:9px;background:#c8c8c8;"></div>
<div class="abs" style="left:60px;top:930px;width:300px;height:16px;overflow:hidden"><svg class="abs" style="left:5px;top:3px" width="20" height="14" viewBox="0 0 20 14"><path d="M2,3 L10,11 L18,3" fill="none" stroke="#aaa" stroke-width="2.6"/></svg><svg class="abs" style="left:37px;top:3px" width="26" height="24" viewBox="0 0 26 24"><path d="M1.5,3 L9,3 L11.5,6 L24,6 L24,21 L1.5,21 Z" fill="none" stroke="#aaa" stroke-width="1.5"/></svg><div class="abs" style="left:70px;top:3.9px;font-size:19.5px;line-height:22.4px;color:#9a9a9a;font-weight:normal;font-style:italic;white-space:nowrap;-webkit-text-stroke:0.25px #9a9a9a;">Electrical Mounting (4)</div></div>
<div class="abs" style="left:60px;top:946px;width:300px;height:1.5px;background:#dedede;"></div>
<svg class="abs" style="left:65px;top:960px" width="20" height="14" viewBox="0 0 20 14"><path d="M2,3 L10,11 L18,3" fill="none" stroke="#444" stroke-width="2.6"/></svg>
<div class="abs" style="left:95px;top:955.9px;font-size:19.5px;line-height:22.4px;color:#333;font-weight:normal;font-style:normal;white-space:nowrap;-webkit-text-stroke:0.25px #333;">Parts (11)</div>
<div class="abs" style="left:0;top:980px;width:368px;height:413px;overflow:hidden"><svg class="abs" style="left:96px;top:14px" width="25" height="25" viewBox="0 0 25 25"><path d="M1.5,15 L5,11.5 L9,11.5 L9,4 L13,1.5 L22,1.5 L22,19 L18.5,22.5 L1.5,22.5 Z" fill="#fff" stroke="#666" stroke-width="1.4" stroke-linejoin="round"/><path d="M1.5,15 L18.5,15 L18.5,22.5 M18.5,15 L22,11.5 M9,11.5 L13,8 L22,8 M13,1.5 L13,8" fill="none" stroke="#777" stroke-width="1.1"/></svg>
<div class="abs" style="left:128px;top:14.9px;font-size:19.5px;line-height:22.4px;color:#333;font-weight:normal;font-style:normal;white-space:nowrap;-webkit-text-stroke:0.25px #333;">Origin Cube</div>
<svg class="abs" style="left:96px;top:53px" width="25" height="25" viewBox="0 0 25 25"><path d="M1.5,15 L5,11.5 L9,11.5 L9,4 L13,1.5 L22,1.5 L22,19 L18.5,22.5 L1.5,22.5 Z" fill="#fff" stroke="#666" stroke-width="1.4" stroke-linejoin="round"/><path d="M1.5,15 L18.5,15 L18.5,22.5 M18.5,15 L22,11.5 M9,11.5 L13,8 L22,8 M13,1.5 L13,8" fill="none" stroke="#777" stroke-width="1.1"/></svg>
<div class="abs" style="left:128px;top:53.9px;font-size:19.5px;line-height:22.4px;color:#333;font-weight:normal;font-style:normal;white-space:nowrap;-webkit-text-stroke:0.25px #333;">Tube 2"x1"x17.5"</div>
<svg class="abs" style="left:96px;top:92px" width="25" height="25" viewBox="0 0 25 25"><path d="M1.5,15 L5,11.5 L9,11.5 L9,4 L13,1.5 L22,1.5 L22,19 L18.5,22.5 L1.5,22.5 Z" fill="#fff" stroke="#666" stroke-width="1.4" stroke-linejoin="round"/><path d="M1.5,15 L18.5,15 L18.5,22.5 M18.5,15 L22,11.5 M9,11.5 L13,8 L22,8 M13,1.5 L13,8" fill="none" stroke="#777" stroke-width="1.1"/></svg>
<div class="abs" style="left:128px;top:92.9px;font-size:19.5px;line-height:22.4px;color:#333;font-weight:normal;font-style:normal;white-space:nowrap;-webkit-text-stroke:0.25px #333;">Tube 2"x1"x17.5"</div>
<svg class="abs" style="left:96px;top:131px" width="25" height="25" viewBox="0 0 25 25"><path d="M1.5,15 L5,11.5 L9,11.5 L9,4 L13,1.5 L22,1.5 L22,19 L18.5,22.5 L1.5,22.5 Z" fill="#fff" stroke="#666" stroke-width="1.4" stroke-linejoin="round"/><path d="M1.5,15 L18.5,15 L18.5,22.5 M18.5,15 L22,11.5 M9,11.5 L13,8 L22,8 M13,1.5 L13,8" fill="none" stroke="#777" stroke-width="1.1"/></svg>
<div class="abs" style="left:128px;top:131.9px;font-size:19.5px;line-height:22.4px;color:#333;font-weight:normal;font-style:normal;white-space:nowrap;-webkit-text-stroke:0.25px #333;">Tube 2"x2"x24"</div>
<svg class="abs" style="left:96px;top:170px" width="25" height="25" viewBox="0 0 25 25"><path d="M1.5,15 L5,11.5 L9,11.5 L9,4 L13,1.5 L22,1.5 L22,19 L18.5,22.5 L1.5,22.5 Z" fill="#fff" stroke="#666" stroke-width="1.4" stroke-linejoin="round"/><path d="M1.5,15 L18.5,15 L18.5,22.5 M18.5,15 L22,11.5 M9,11.5 L13,8 L22,8 M13,1.5 L13,8" fill="none" stroke="#777" stroke-width="1.1"/></svg>
<div class="abs" style="left:128px;top:170.9px;font-size:19.5px;line-height:22.4px;color:#333;font-weight:normal;font-style:normal;white-space:nowrap;-webkit-text-stroke:0.25px #333;">Tube 2"x1"x17.5"</div>
<svg class="abs" style="left:96px;top:209px" width="25" height="25" viewBox="0 0 25 25"><path d="M1.5,15 L5,11.5 L9,11.5 L9,4 L13,1.5 L22,1.5 L22,19 L18.5,22.5 L1.5,22.5 Z" fill="#fff" stroke="#666" stroke-width="1.4" stroke-linejoin="round"/><path d="M1.5,15 L18.5,15 L18.5,22.5 M18.5,15 L22,11.5 M9,11.5 L13,8 L22,8 M13,1.5 L13,8" fill="none" stroke="#777" stroke-width="1.1"/></svg>
<div class="abs" style="left:128px;top:209.9px;font-size:19.5px;line-height:22.4px;color:#333;font-weight:normal;font-style:normal;white-space:nowrap;-webkit-text-stroke:0.25px #333;">Tube 2"x1"x17.5"</div>
<svg class="abs" style="left:96px;top:248px" width="25" height="25" viewBox="0 0 25 25"><path d="M1.5,15 L5,11.5 L9,11.5 L9,4 L13,1.5 L22,1.5 L22,19 L18.5,22.5 L1.5,22.5 Z" fill="#fff" stroke="#666" stroke-width="1.4" stroke-linejoin="round"/><path d="M1.5,15 L18.5,15 L18.5,22.5 M18.5,15 L22,11.5 M9,11.5 L13,8 L22,8 M13,1.5 L13,8" fill="none" stroke="#777" stroke-width="1.1"/></svg>
<div class="abs" style="left:128px;top:248.9px;font-size:19.5px;line-height:22.4px;color:#333;font-weight:normal;font-style:normal;white-space:nowrap;-webkit-text-stroke:0.25px #333;">Bellypan</div>
<svg class="abs" style="left:96px;top:287px" width="25" height="25" viewBox="0 0 25 25"><path d="M1.5,15 L5,11.5 L9,11.5 L9,4 L13,1.5 L22,1.5 L22,19 L18.5,22.5 L1.5,22.5 Z" fill="#fff" stroke="#666" stroke-width="1.4" stroke-linejoin="round"/><path d="M1.5,15 L18.5,15 L18.5,22.5 M18.5,15 L22,11.5 M9,11.5 L13,8 L22,8 M13,1.5 L13,8" fill="none" stroke="#777" stroke-width="1.1"/></svg>
<div class="abs" style="left:128px;top:287.9px;font-size:19.5px;line-height:22.4px;color:#333;font-weight:normal;font-style:normal;white-space:nowrap;-webkit-text-stroke:0.25px #333;">Crosstube Gusset</div>
<svg class="abs" style="left:96px;top:326px" width="25" height="25" viewBox="0 0 25 25"><path d="M1.5,15 L5,11.5 L9,11.5 L9,4 L13,1.5 L22,1.5 L22,19 L18.5,22.5 L1.5,22.5 Z" fill="#fff" stroke="#666" stroke-width="1.4" stroke-linejoin="round"/><path d="M1.5,15 L18.5,15 L18.5,22.5 M18.5,15 L22,11.5 M9,11.5 L13,8 L22,8 M13,1.5 L13,8" fill="none" stroke="#777" stroke-width="1.1"/></svg>
<div class="abs" style="left:128px;top:326.9px;font-size:19.5px;line-height:22.4px;color:#333;font-weight:normal;font-style:normal;white-space:nowrap;-webkit-text-stroke:0.25px #333;">Battery Plate</div>
<svg class="abs" style="left:96px;top:365px" width="25" height="25" viewBox="0 0 25 25"><path d="M1.5,15 L5,11.5 L9,11.5 L9,4 L13,1.5 L22,1.5 L22,19 L18.5,22.5 L1.5,22.5 Z" fill="#fff" stroke="#666" stroke-width="1.4" stroke-linejoin="round"/><path d="M1.5,15 L18.5,15 L18.5,22.5 M18.5,15 L22,11.5 M9,11.5 L13,8 L22,8 M13,1.5 L13,8" fill="none" stroke="#777" stroke-width="1.1"/></svg>
<div class="abs" style="left:128px;top:365.9px;font-size:19.5px;line-height:22.4px;color:#333;font-weight:normal;font-style:normal;white-space:nowrap;-webkit-text-stroke:0.25px #333;">2 in. Round Spacer</div>
<svg class="abs" style="left:96px;top:404px" width="25" height="25" viewBox="0 0 25 25"><path d="M1.5,15 L5,11.5 L9,11.5 L9,4 L13,1.5 L22,1.5 L22,19 L18.5,22.5 L1.5,22.5 Z" fill="#fff" stroke="#666" stroke-width="1.4" stroke-linejoin="round"/><path d="M1.5,15 L18.5,15 L18.5,22.5 M18.5,15 L22,11.5 M9,11.5 L13,8 L22,8 M13,1.5 L13,8" fill="none" stroke="#777" stroke-width="1.1"/></svg>
<div class="abs" style="left:128px;top:404.9px;font-size:19.5px;line-height:22.4px;color:#333;font-weight:normal;font-style:normal;white-space:nowrap;-webkit-text-stroke:0.25px #333;">Battery Strap</div></div>
<div class="abs" style="left:0px;top:1394px;width:2558px;height:44px;background:#d6d6d6;"></div>
<div class="abs" style="left:0px;top:1394px;width:60px;height:44px;background:#f6f6f6;"></div>
<svg class="abs" style="left:16px;top:1408px" width="30" height="24" viewBox="0 0 30 24"><rect x="1" y="1" width="26" height="12" rx="2" fill="#333"/><circle cx="17" cy="14" r="7" fill="#f6f6f6" stroke="#333" stroke-width="3"/><path d="M22,19 L28,24" stroke="#333" stroke-width="3.5"/></svg>
<svg class="abs" style="left:73px;top:1405px" width="25" height="23" viewBox="0 0 25 23"><path d="M12.5,1 L12.5,22 M1,11.5 L24,11.5" stroke="#555" stroke-width="3.8"/></svg>
<div class="abs" style="left:110px;top:1394px;width:56px;height:44px;background:#e2e2e2;"></div>
<svg class="abs" style="left:123px;top:1399px" width="30" height="27" viewBox="0 0 30 27"><path d="M1,13 L15,1 L29,13 L25,13 L25,26 L5,26 L5,13Z" fill="#666"/><rect x="20" y="3" width="4" height="7" fill="#666"/></svg>
<svg class="abs" style="left:160px;top:1394px" width="190" height="44" viewBox="0 0 190 44"><path d="M0,0 L175,0 L187,22 L175,44 L0,44 L10,22Z" fill="#efefef"/></svg>
<svg class="abs" style="left:188px;top:1403px" width="29" height="21" viewBox="0 0 29 21"><path d="M1.5,1.5 L10,1.5 L12.5,4.5 L27,4.5 L27,19.5 L1.5,19.5 Z" fill="none" stroke="#555" stroke-width="1.8"/></svg>
<div class="abs" style="left:225px;top:1402.4px;font-size:21.1px;line-height:24.3px;color:#555;font-weight:normal;font-style:normal;white-space:nowrap;-webkit-text-stroke:0.25px #555;">Drivetrain</div>
<div class="abs" style="left:349px;top:1396px;width:300px;height:42px;background:#ffffff;border-radius:5px 5px 0 0"></div>
<div class="abs" style="left:349px;top:1434px;width:300px;height:4px;background:#1a56b8;"></div>
<svg class="abs" style="left:366px;top:1402px" width="28" height="28" viewBox="0 0 28 28"><path d="M2,12 L7,9 L11,9 L11,26 L2,26Z M11,5 L16,2 L25,2 L25,26 L11,26Z" fill="#fff" stroke="#333" stroke-width="1.5"/><path d="M2,12 L6,14 L6,26 M11,5 L16,8 L16,26 M16,8 L25,2" fill="none" stroke="#333" stroke-width="1.2"/></svg>
<div class="abs" style="left:399px;top:1404.4px;font-size:21.1px;line-height:24.3px;color:#333;font-weight:normal;font-style:normal;white-space:nowrap;-webkit-text-stroke:0.25px #333;">Drivetrain</div>
<div class="abs" style="left:652px;top:1396px;width:299px;height:42px;background:#e9e9e9;border-radius:5px 5px 0 0"></div>
<svg class="abs" style="left:668px;top:1402px" width="28" height="28" viewBox="0 0 28 28"><path d="M2,6 L7,2 L25,2 L25,22 L20,26 L2,26Z" fill="#fff" stroke="#333" stroke-width="1.5"/><rect x="7" y="8" width="15" height="15" fill="#8c8c8c" stroke="#333" stroke-width="1.2"/><path d="M2,6 L20,6 L25,2 M20,6 L20,26" fill="none" stroke="#333" stroke-width="1.2"/></svg>
<div class="abs" style="left:702px;top:1404.4px;font-size:21.1px;line-height:24.3px;color:#444;font-weight:normal;font-style:normal;white-space:nowrap;-webkit-text-stroke:0.25px #444;">Drivetrain Assembly</div>
<div class="abs" style="left:955px;top:1396px;width:299px;height:42px;background:#e9e9e9;border-radius:5px 5px 0 0"></div>
<svg class="abs" style="left:971px;top:1402px" width="28" height="28" viewBox="0 0 28 28"><path d="M2,12 L7,9 L11,9 L11,26 L2,26Z M11,5 L16,2 L25,2 L25,26 L11,26Z" fill="#fff" stroke="#333" stroke-width="1.5"/><path d="M2,12 L6,14 L6,26 M11,5 L16,8 L16,26 M16,8 L25,2" fill="none" stroke="#333" stroke-width="1.2"/></svg>
<div class="abs" style="left:1005px;top:1404.4px;font-size:21.1px;line-height:24.3px;color:#444;font-weight:normal;font-style:normal;white-space:nowrap;-webkit-text-stroke:0.25px #444;">Bumpers</div>
<div class="abs" style="left:1258px;top:1396px;width:299px;height:42px;background:#e9e9e9;border-radius:5px 5px 0 0"></div>
<svg class="abs" style="left:1274px;top:1402px" width="28" height="28" viewBox="0 0 28 28"><path d="M2,6 L7,2 L25,2 L25,22 L20,26 L2,26Z" fill="#fff" stroke="#333" stroke-width="1.5"/><rect x="7" y="8" width="15" height="15" fill="#8c8c8c" stroke="#333" stroke-width="1.2"/><path d="M2,6 L20,6 L25,2 M20,6 L20,26" fill="none" stroke="#333" stroke-width="1.2"/></svg>
<div class="abs" style="left:1308px;top:1404.4px;font-size:21.1px;line-height:24.3px;color:#444;font-weight:normal;font-style:normal;white-space:nowrap;-webkit-text-stroke:0.25px #444;">Bumper Assembly</div>
<div class="abs" style="left:368px;top:716px;width:48px;height:50px;background:#ffffff;"></div>
<svg class="abs" style="left:380px;top:730px" width="26" height="26" viewBox="0 0 26 26"><path d="M2,2 L6,6 L10,2" fill="none" stroke="#333" stroke-width="1.6"/><rect x="5" y="8" width="1.8" height="18" fill="#444"/><rect x="10" y="2" width="14" height="1.8" fill="#333"/><rect x="9" y="9" width="15" height="1.8" fill="#333"/><rect x="9" y="16" width="15" height="1.8" fill="#333"/><rect x="9" y="22.5" width="15" height="1.8" fill="#333"/></svg>
<div class="abs" style="left:2394px;top:1350px;width:164px;height:45px;background:rgba(245,245,245,0.82);"></div>
<svg class="abs" style="left:2410px;top:1364px" width="28" height="20" viewBox="0 0 28 20"><ellipse cx="19" cy="7" rx="7.5" ry="5.5" fill="none" stroke="#333" stroke-width="1.8"/><ellipse cx="19" cy="6.5" rx="3.5" ry="1.8" fill="none" stroke="#333" stroke-width="1.3"/><path d="M2,12 L13,12 M2,12 L2,18 L20,18 Q26,18 26,10" fill="none" stroke="#333" stroke-width="1.8"/><path d="M5,18 L5,15 M8,18 L8,16 M11,18 L11,15 M14,18 L14,16 M17,18 L17,15" stroke="#333" stroke-width="1"/></svg>
<svg class="abs" style="left:2461px;top:1364px" width="32" height="21" viewBox="0 0 32 21"><path d="M2,19 A14,14 0 0 1 30,19 Z" fill="none" stroke="#333" stroke-width="2"/><path d="M7,19 A9,9 0 0 1 25,19 L20,19 A4,4 0 0 0 12,19 Z" fill="none" stroke="#333" stroke-width="1.6"/></svg>
<svg class="abs" style="left:2516px;top:1363px" width="26" height="22" viewBox="0 0 26 22"><path d="M2,2 L24,2 M13,2 L13,19 M2,20 L24,20" stroke="#333" stroke-width="2.2"/><path d="M4,4 L1,14 L7,14Z M22,4 L19,14 L25,14Z" fill="none" stroke="#333" stroke-width="1.6"/></svg>
<div class="abs" style="left:2511px;top:485px;width:47px;height:200px;background:#ffffff;border:1px solid #cfcfcf;border-right:none"></div>
<div class="abs" style="left:2512px;top:535px;width:46px;height:1px;background:#d6d6d6;"></div>
<div class="abs" style="left:2512px;top:585px;width:46px;height:1px;background:#d6d6d6;"></div>
<div class="abs" style="left:2512px;top:635px;width:46px;height:1px;background:#d6d6d6;"></div>
<svg class="abs" style="left:2520px;top:495px" width="32" height="32" viewBox="0 0 32 32"><path d="M6,28 L6,20 L14,4 L18,6 L12,20 M10,20 L20,6 L24,9 L14,20 M14,20 L24,12 L27,16 L20,20" fill="#777" stroke="#333" stroke-width="1"/><rect x="3" y="20" width="26" height="9" fill="#fff" stroke="#333" stroke-width="1.5"/><circle cx="8" cy="24.5" r="1.5" fill="none" stroke="#333"/><rect x="20" y="21" width="8" height="7" fill="#ccc"/></svg>
<svg class="abs" style="left:2520px;top:545px" width="32" height="32" viewBox="0 0 32 32"><g fill="#2b62c4"><rect x="3" y="3" width="4" height="4"/><rect x="8" y="3" width="4" height="4"/><rect x="13" y="3" width="4" height="4"/><rect x="3" y="8" width="4" height="4"/><rect x="8" y="8" width="4" height="4"/><rect x="13" y="8" width="4" height="4"/><rect x="3" y="13" width="4" height="4"/><rect x="8" y="13" width="4" height="4"/></g><path d="M12,14 L20,10 L29,14 L29,24 L20,29 L12,24Z M12,14 L20,19 L29,14 M20,19 L20,29" fill="none" stroke="#333" stroke-width="1.5"/></svg>
<svg class="abs" style="left:2520px;top:595px" width="32" height="32" viewBox="0 0 32 32"><g fill="#444"><rect x="4" y="3" width="4" height="4"/><rect x="9" y="3" width="4" height="4"/><rect x="14" y="3" width="4" height="4"/><rect x="4" y="8" width="4" height="4"/><rect x="9" y="8" width="4" height="4"/><rect x="4" y="13" width="4" height="4"/></g><path d="M11,15 L18,12 L25,15 L25,23 L18,26 L11,23Z M11,15 L18,18 L25,15 M18,18 L18,26" fill="#fff" stroke="#333" stroke-width="1.4"/><path d="M6,16 Q3,16 3,20 L1,22 L3,24 Q3,29 7,29 M28,14 Q30,16 30,20 L31,22 L30,24 Q30,29 27,29" fill="none" stroke="#333" stroke-width="1.2"/></svg>
<svg class="abs" style="left:2520px;top:645px" width="32" height="32" viewBox="0 0 32 32"><g fill="#444"><rect x="5" y="3" width="4" height="4"/><rect x="10" y="3" width="4" height="4"/><rect x="15" y="3" width="4" height="4"/><rect x="5" y="8" width="4" height="4"/><rect x="10" y="8" width="4" height="4"/><rect x="5" y="13" width="4" height="4"/></g><text x="1" y="28" font-family="Liberation Serif" font-weight="bold" font-size="20" fill="#222">(</text><text x="8" y="28" font-family="Liberation Serif" font-style="italic" font-weight="bold" font-size="20" fill="#222">x</text><text x="22" y="28" font-family="Liberation Serif" font-weight="bold" font-size="20" fill="#222">)</text></svg>
<div class="abs" style="left:2511px;top:710px;width:47px;height:287px;background:#ffffff;border:1px solid #cfcfcf;border-right:none"></div>
<div class="abs" style="left:2512px;top:749px;width:46px;height:1px;background:#d6d6d6;"></div>
<div class="abs" style="left:2512px;top:799px;width:46px;height:1px;background:#d6d6d6;"></div>
<div class="abs" style="left:2512px;top:848px;width:46px;height:1px;background:#d6d6d6;"></div>
<div class="abs" style="left:2512px;top:898px;width:46px;height:1px;background:#d6d6d6;"></div>
<div class="abs" style="left:2512px;top:947px;width:46px;height:1px;background:#d6d6d6;"></div>
<div class="abs" style="left:2516px;top:711px;width:38px;height:38px;background:#e6e6e6;border-radius:5px"></div><svg class="abs" style="left:2519px;top:714px" width="32" height="32" viewBox="0 0 32 32"><rect x="2" y="2" width="28" height="28" fill="#1a4fc4" stroke="#111" stroke-width="1.5"/><text x="16" y="24" text-anchor="middle" font-family="Liberation Serif" font-weight="bold" font-size="18" fill="#fff">MK</text></svg>
<div class="abs" style="left:2516px;top:756px;width:38px;height:38px;background:#e6e6e6;border-radius:5px"></div><svg class="abs" style="left:2519px;top:759px" width="32" height="32" viewBox="0 0 32 32"><rect x="3" y="11" width="26" height="17" rx="2" fill="#333" transform="rotate(-4 16 19)"/><circle cx="11" cy="18" r="4" fill="#fff"/><circle cx="21" cy="17.5" r="4" fill="#fff"/><circle cx="11" cy="18" r="2" fill="#2b62c4"/><circle cx="21" cy="17.5" r="2" fill="#2b62c4"/><path d="M12,24 Q17,26 21,23" stroke="#fff" stroke-width="1.6" fill="none"/><path d="M16,10 L16,5" stroke="#333" stroke-width="2"/><path d="M9,3 Q7,6 9,8 M23,3 Q25,6 23,8" stroke="#2b62c4" stroke-width="1.4" fill="none"/></svg>
<div class="abs" style="left:2516px;top:805px;width:38px;height:38px;background:#e6e6e6;border-radius:5px"></div><svg class="abs" style="left:2519px;top:808px" width="32" height="32" viewBox="0 0 32 32"><path d="M8,10 L3,16 L8,22 M3,16 L13,16" fill="none" stroke="#333" stroke-width="1.6"/><path d="M14,6 Q11,6 11,10 L11,14 L9,16 L11,18 L11,22 Q11,26 14,26" fill="none" stroke="#333" stroke-width="1.5"/><path d="M17,12 L23,9 L29,12 L29,20 L23,23 L17,20Z M17,12 L23,15 L29,12 M23,15 L23,23" fill="none" stroke="#333" stroke-width="1.5"/></svg>
<div class="abs" style="left:2516px;top:855px;width:38px;height:38px;background:#e6e6e6;border-radius:5px"></div><svg class="abs" style="left:2519px;top:858px" width="32" height="32" viewBox="0 0 32 32"><path d="M16,3 L29,28 L3,28Z" fill="#1e9be0"/><path d="M8,28 Q14,18 20,22 Q16,14 12,22" fill="#e6e6e6"/><path d="M9,24 Q15,17 22,25 L24,28 Z" fill="#e6e6e6"/></svg>
<div class="abs" style="left:2516px;top:904px;width:38px;height:38px;background:#e6e6e6;border-radius:5px"></div><svg class="abs" style="left:2519px;top:907px" width="32" height="32" viewBox="0 0 32 32"><rect x="1" y="1" width="30" height="30" fill="#4caf50"/><path d="M5,8 Q11,6 15,9 L15,26 Q11,23 5,25Z M17,9 Q21,6 27,8 L27,25 Q21,23 17,26Z" fill="#fff"/></svg>
<div class="abs" style="left:2516px;top:953px;width:38px;height:38px;background:#e6e6e6;border-radius:5px"></div><svg class="abs" style="left:2519px;top:956px" width="32" height="32" viewBox="0 0 32 32"><rect x="1" y="1" width="30" height="30" fill="#1a4fc4" stroke="#111" stroke-width="1.5"/><path d="M5,8 Q11,6 15,9 L15,26 Q11,23 5,25Z M17,9 Q21,6 27,8 L27,25 Q21,23 17,26Z" fill="#fff"/></svg>
<svg class="abs" style="left:2280px;top:135px" width="290" height="235" viewBox="0 0 290 235">
<g fill="#e1e5e8">
<path d="M144,3 L156,17 L132,17Z"/>
<path d="M144,226 L156,212 L132,212Z"/>
<path d="M33,115 L47,103 L47,127Z"/>
<path d="M255,115 L241,103 L241,127Z"/>
</g>
<g fill="none" stroke="#e1e5e8" stroke-width="9">
<path d="M113,20 Q87,30 72,48"/>
<path d="M175,20 Q201,30 216,48"/>
</g>
<path d="M62,42 L84,50 L64,62Z M226,42 L204,50 L224,62Z" fill="#e1e5e8"/>
<g fill="none" stroke="#e3e6e9" stroke-width="10" stroke-linejoin="round">
<path d="M144,54 L199,82 L199,142 L144,170 L89,142 L89,82Z"/>
<path d="M89,82 L144,110 L199,82 M144,110 L144,170"/>
</g>
<g fill="#ffffff">
<path d="M144,62 L189,85 L144,104 L99,85Z"/>
<path d="M95,92 L138,114 L138,160 L95,138Z"/>
<path d="M193,92 L150,114 L150,160 L193,138Z"/>
</g>
<text x="144" y="86" font-family="Liberation Sans" font-size="12" fill="#555" text-anchor="middle" transform="rotate(25 144 82)">Top</text>
<text x="116" y="134" font-family="Liberation Sans" font-size="16" fill="#333" text-anchor="middle" transform="rotate(22 116 128)">Front</text>
<text x="172" y="132" font-family="Liberation Sans" font-size="14" fill="#666" text-anchor="middle" transform="rotate(-32 172 126)">Right</text>
<path d="M80,157 L80,80" stroke="#5b5bd6" stroke-width="2"/>
<path d="M80,157 L148,185" stroke="#e05050" stroke-width="2"/>
<path d="M80,157 L134,122" stroke="#5cb85c" stroke-width="1.5"/>
<text x="73" y="73" font-family="Liberation Sans" font-size="18" fill="#3030d0">Z</text>
<text x="154" y="196" font-family="Liberation Sans" font-size="18" fill="#e05050">X</text>
</svg>
<svg class="abs" style="left:2476px;top:333px" width="30" height="30" viewBox="0 0 30 30"><path d="M14,2 L26,7 L26,22 L14,28 L2,22 L2,7Z" fill="#d0d0d0" stroke="#333" stroke-width="1.8" stroke-linejoin="round"/><path d="M2,7 L14,12 L26,7 M14,12 L14,28" fill="none" stroke="#333" stroke-width="1.5"/><path d="M2,7 L14,12 L14,28 L2,22Z" fill="#999"/><path d="M2,7 L14,2 L26,7 L14,12Z" fill="#eee"/></svg>
<svg class="abs" style="left:2514px;top:342px" width="16" height="10" viewBox="0 0 16 10"><path d="M1,1 L15,1 L8,8 Z" fill="#333"/></svg>
</body></html>
